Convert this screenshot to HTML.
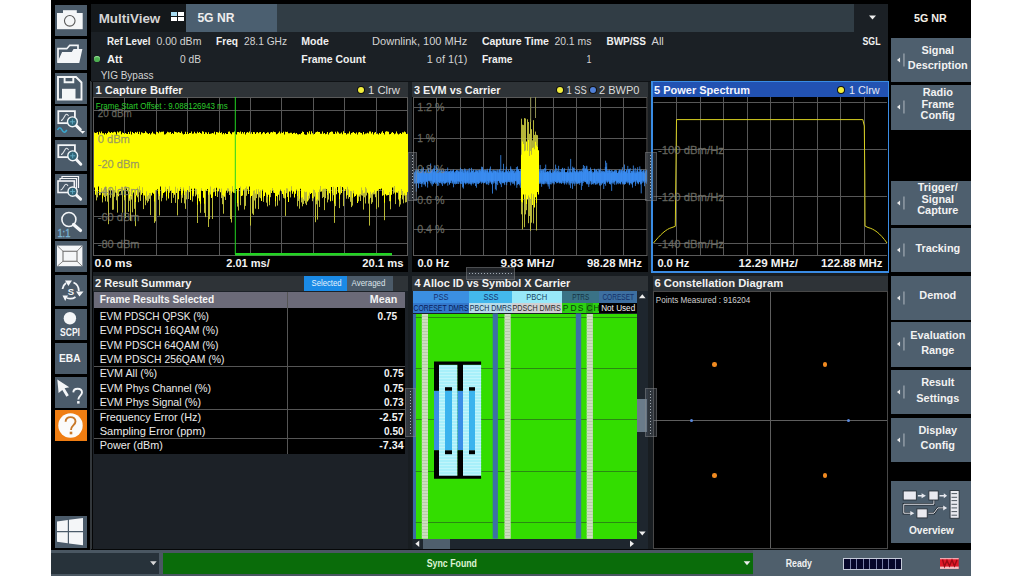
<!DOCTYPE html>
<html><head><meta charset="utf-8"><style>
html,body{margin:0;padding:0;width:1024px;height:576px;overflow:hidden;background:#fff;font-family:"Liberation Sans", sans-serif;}
svg text{font-family:"Liberation Sans", sans-serif;}
</style></head><body>
<div style="position:absolute;left:51px;top:0px;width:920px;height:576px;background:#000;"></div><div style="position:absolute;left:55px;top:5px;width:32px;height:31px;background:#4b5b6a;"></div><div style="position:absolute;left:55px;top:39px;width:32px;height:31px;background:#4b5b6a;"></div><div style="position:absolute;left:55px;top:73px;width:32px;height:31px;background:#4b5b6a;"></div><div style="position:absolute;left:55px;top:106px;width:32px;height:31px;background:#4b5b6a;"></div><div style="position:absolute;left:55px;top:140px;width:32px;height:31px;background:#4b5b6a;"></div><div style="position:absolute;left:55px;top:174px;width:32px;height:31px;background:#4b5b6a;"></div><div style="position:absolute;left:55px;top:208px;width:32px;height:31px;background:#4b5b6a;"></div><div style="position:absolute;left:55px;top:241px;width:32px;height:31px;background:#4b5b6a;"></div><div style="position:absolute;left:55px;top:275px;width:32px;height:31px;background:#4b5b6a;"></div><div style="position:absolute;left:55px;top:309px;width:32px;height:31px;background:#4b5b6a;"></div><div style="position:absolute;left:55px;top:343px;width:32px;height:31px;background:#4b5b6a;"></div><div style="position:absolute;left:55px;top:377px;width:32px;height:31px;background:#4b5b6a;"></div><div style="position:absolute;left:55px;top:410px;width:32px;height:31px;background:#ef7d12;"></div><div style="position:absolute;left:55px;top:516px;width:32px;height:32px;background:#4b5b6a;"></div><svg style="position:absolute;left:55px;top:5px" width="32" height="31" viewBox="0 0 32 31"><rect x="2" y="8" width="25.7" height="16.2" fill="#f4f6f8"/><rect x="8" y="5.2" width="13.8" height="3" fill="#f4f6f8"/><circle cx="14.75" cy="15.8" r="5.3" stroke="#5a5a5a" stroke-width="1.1" fill="none"/></svg><svg style="position:absolute;left:55px;top:39px" width="32" height="31" viewBox="0 0 32 31"><path d="M3 23.5V9.7H11.8L14.8 6.3H23V10" stroke="#f4f6f8" stroke-width="1.7" fill="none"/><path d="M2.1 23.9L7.1 13H16.75L18.6 9.9H27.4L24.25 23.9Z" fill="#f4f6f8"/></svg><svg style="position:absolute;left:55px;top:73px" width="32" height="31" viewBox="0 0 32 31"><path d="M3 4H21L26.5 9.5V26.5H3Z" stroke="#f4f6f8" stroke-width="1.9" fill="none"/><path d="M9.6 4V9.3H18.3V4" stroke="#f4f6f8" stroke-width="1.9" fill="none"/><rect x="7" y="15.8" width="13.5" height="10.4" fill="#f4f6f8"/></svg><svg style="position:absolute;left:55px;top:106px" width="32" height="31" viewBox="0 0 32 31"><rect x="3.3" y="5.15" width="16.6" height="12" stroke="#f4f6f8" stroke-width="1.8" fill="none"/><path d="M6 14.5C8.5 14.5 9.5 8.5 11.5 8.3C12.5 8.2 13 9 13.5 10" stroke="#e0e4e8" stroke-width="1.1" fill="none"/><path d="M17.4 15.8L25.3 23.6" stroke="#f4f6f8" stroke-width="3" stroke-linecap="round"/><circle cx="17.4" cy="15.8" r="4.9" fill="#2f6275" stroke="#f4f6f8" stroke-width="1.4"/><path d="M14.899999999999999 15.8H19.9M17.4 13.3V18.3" stroke="#5fa8c0" stroke-width="1"/><path d="M24.9 24.9H30.2L27.6 27.8Z" fill="#f4f6f8"/><path d="M2.5 24C4 21 5.5 21 7 24S10 27 11.8 24" stroke="#3aa8d0" stroke-width="1.6" fill="none"/></svg><svg style="position:absolute;left:55px;top:140px" width="32" height="31" viewBox="0 0 32 31"><rect x="3.3" y="5.15" width="16.6" height="12" stroke="#f4f6f8" stroke-width="1.8" fill="none"/><path d="M6 14.5C8.5 14.5 9.5 8.5 11.5 8.3C12.5 8.2 13 9 13.5 10" stroke="#e0e4e8" stroke-width="1.1" fill="none"/><path d="M17.7 15.8L25.8 24.2" stroke="#f4f6f8" stroke-width="3" stroke-linecap="round"/><circle cx="17.7" cy="15.8" r="4.9" fill="#2f6275" stroke="#f4f6f8" stroke-width="1.4"/><path d="M15.2 15.8H20.2M17.7 13.3V18.3" stroke="#5fa8c0" stroke-width="1"/></svg><svg style="position:absolute;left:55px;top:174px" width="32" height="31" viewBox="0 0 32 31"><path d="M7 4.5V2.5H23.5V14" stroke="#f4f6f8" stroke-width="1.2" fill="none"/><path d="M5 6.5V4.5H21.5V16" stroke="#f4f6f8" stroke-width="1.2" fill="none"/><rect x="3" y="7" width="16.3" height="11.5" stroke="#f4f6f8" stroke-width="1.6" fill="none"/><path d="M5.5 16C8 16 9 10.5 11 10.3C12 10.2 12.5 11 13 12" stroke="#e0e4e8" stroke-width="1.1" fill="none"/><path d="M17.6 17.6L25.6 25.2" stroke="#f4f6f8" stroke-width="3" stroke-linecap="round"/><circle cx="17.6" cy="17.6" r="4.6" fill="#2f6275" stroke="#f4f6f8" stroke-width="1.4"/><path d="M15.100000000000001 17.6H20.1M17.6 15.100000000000001V20.1" stroke="#5fa8c0" stroke-width="1"/></svg><svg style="position:absolute;left:55px;top:208px" width="32" height="31" viewBox="0 0 32 31"><path d="M18.5 16.5L25.5 22.5" stroke="#f4f6f8" stroke-width="3.2" stroke-linecap="round"/><circle cx="13.9" cy="11.5" r="7" fill="none" stroke="#f4f6f8" stroke-width="1.6"/><text x="2.4" y="29" font-family="Liberation Sans" font-size="10.5" fill="#7ab6d6" stroke="#7ab6d6" stroke-width="0.3" textLength="13" lengthAdjust="spacingAndGlyphs">1:1</text></svg><svg style="position:absolute;left:55px;top:241px" width="32" height="31" viewBox="0 0 32 31"><rect x="2" y="4.6" width="25.4" height="20.6" fill="#f4f6f8"/><rect x="8" y="10.25" width="14" height="10" fill="none" stroke="#666" stroke-width="1"/><path d="M2.5 5L8 10.25M27 5L22 10.25M2.5 25L8 20.25M27 25L22 20.25" stroke="#777" stroke-width="0.9"/></svg><svg style="position:absolute;left:55px;top:275px" width="32" height="31" viewBox="0 0 32 31"><path d="M7.5 14A9 9 0 0 1 11 8M18.5 7.5A9 9 0 0 1 23.8 16M20.5 22A9 9 0 0 1 12 23" stroke="#f4f6f8" stroke-width="1.8" fill="none"/><path d="M10 5.5H17L13.4 11Z M21 16.5H28.5L24.5 21.5Z M7.5 20.5H13L10.2 26Z" fill="#f4f6f8"/><text x="15.8" y="20" text-anchor="middle" font-family="Liberation Sans" font-size="9.5" font-weight="bold" fill="#f4f6f8">S</text></svg><svg style="position:absolute;left:55px;top:309px" width="32" height="31" viewBox="0 0 32 31"><circle cx="14.9" cy="9.25" r="6.2" fill="#f4f6f8"/><text x="5" y="27.4" font-family="Liberation Sans" font-size="10" font-weight="bold" fill="#f4f6f8" textLength="20" lengthAdjust="spacingAndGlyphs">SCPI</text></svg><svg style="position:absolute;left:55px;top:343px" width="32" height="31" viewBox="0 0 32 31"><text x="4" y="18.9" font-family="Liberation Sans" font-size="10.8" font-weight="bold" fill="#f4f6f8" textLength="21.5" lengthAdjust="spacingAndGlyphs">EBA</text></svg><svg style="position:absolute;left:55px;top:377px" width="32" height="31" viewBox="0 0 32 31"><path d="M2.3 2.4L14.3 10.3L9.6 11.3L13.8 18.2L11.4 19.8L7.3 12.9L3.6 16Z" fill="#f4f6f8"/><path d="M18.3 15.3C18.5 12.8 20.5 11.8 22.6 11.8C25 11.8 27 13.2 27 15.6C27 18.5 23.3 18.8 23.3 22.6" stroke="#f4f6f8" stroke-width="1.9" fill="none"/><rect x="22.1" y="24.1" width="2.5" height="2.5" fill="#f4f6f8"/></svg><svg style="position:absolute;left:55px;top:410px" width="32" height="31" viewBox="0 0 32 31"><circle cx="15.5" cy="15.5" r="12.2" fill="#fbfbfa"/><path d="M10.6 11.8C10.6 8.7 12.8 7.1 15.5 7.1C18.3 7.1 20.5 8.9 20.5 11.6C20.5 15.1 16 15.4 16 19.9" stroke="#c87828" stroke-width="1.9" fill="none"/><rect x="14.7" y="21.7" width="2.6" height="2.6" fill="#c87828"/></svg><svg style="position:absolute;left:55px;top:516px" width="32" height="32" viewBox="0 0 32 32"><path d="M2 5.5L12.8 4V15H2Z M14 3.8L28 2V15H14Z M2 16.2H12.8V27.2L2 25.7Z M14 16.2H28V29.2L14 27.4Z" fill="#f4f6f8"/></svg><div style="position:absolute;left:91px;top:3.5px;width:763px;height:28px;background:#313d45;"></div><div style="position:absolute;left:91px;top:3.5px;width:95px;height:28px;background:#14181b;"></div><div style="position:absolute;left:186px;top:3.5px;width:91px;height:28px;background:#4b5f70;"></div><div style="position:absolute;left:854px;top:3.5px;width:34px;height:28.5px;background:#1b2025;"></div><div style="position:absolute;left:171px;top:12px;width:6px;height:4px;background:#a8dcf2;"></div><div style="position:absolute;left:178px;top:12px;width:6px;height:4px;background:#ffffff;"></div><div style="position:absolute;left:171px;top:17px;width:6px;height:4px;background:#ffffff;"></div><div style="position:absolute;left:178px;top:17px;width:6px;height:4px;background:#ffffff;"></div><svg style="position:absolute;left:866px;top:12px" width="14" height="12"><path d="M3.0 3.4H10.0L6.5 7.6Z" fill="#eee"/></svg><div style="position:absolute;left:91px;top:31.5px;width:797px;height:49.3px;background:#1b2025;"></div><div style="position:absolute;left:93.6px;top:55.6px;width:6.4px;height:6px;border-radius:50%;background:#4caf50;box-shadow:inset 0 1px 1px #9be39b"></div><div style="position:absolute;left:91px;top:81px;width:797px;height:469px;background:#181d21;"></div><div style="position:absolute;left:89.6px;top:81px;width:2.4px;height:469px;background:#33383c;"></div><div style="position:absolute;left:92px;top:81px;width:1px;height:469px;background:#050607;"></div><div style="position:absolute;left:91px;top:548.5px;width:797px;height:1.8px;background:#060809;"></div><div style="position:absolute;left:91px;top:80.7px;width:797px;height:1.3px;background:#0f1215;"></div><div style="position:absolute;left:93px;top:82px;width:315px;height:190px;background:#000;"></div><div style="position:absolute;left:93px;top:82px;width:315px;height:15px;background:#2e3337;"></div><div style="position:absolute;left:358px;top:87px;width:6px;height:6px;border-radius:50%;background:#f2ee3c;box-shadow:0 0 0 1px #111"></div><svg style="position:absolute;left:93px;top:97px" width="315" height="159" viewBox="93 97 315 159"><path d="M124.5 97V255.5 M156.5 97V255.5 M187.5 97V255.5 M219.5 97V255.5 M250.5 97V255.5 M281.5 97V255.5 M313.5 97V255.5 M344.5 97V255.5 M376.5 97V255.5 M93.5 110.5H407.5 M93.5 136.5H407.5 M93.5 163.5H407.5 M93.5 190.5H407.5 M93.5 216.5H407.5 M93.5 243.5H407.5" stroke="#575757" stroke-width="1" fill="none"/><rect x="93.5" y="97.5" width="314" height="158" stroke="#5a5a5a" fill="none" stroke-width="1"/><path d="M96.5 188.9V200.4 M97.5 190.3V197.4 M100.5 190.4V194.9 M101.5 186.1V192.6 M102.5 196.5V202.4 M103.5 189.3V195.6 M104.5 185.2V197.0 M105.5 184.4V201.3 M106.5 187.1V195.8 M107.5 192.4V201.7 M108.5 191.0V224.2 M110.5 186.3V197.8 M112.5 189.5V209.9 M113.5 188.2V209.6 M114.5 188.1V196.8 M115.5 184.0V192.6 M116.5 190.9V200.3 M117.5 193.0V212.6 M122.5 185.2V212.7 M124.5 195.1V200.3 M125.5 184.3V218.1 M128.5 192.1V211.8 M129.5 196.6V200.8 M130.5 193.7V220.9 M131.5 193.9V199.6 M132.5 192.2V212.3 M134.5 193.1V208.8 M135.5 199.9V226.2 M137.5 185.5V197.3 M138.5 193.8V202.2 M139.5 184.1V192.4 M140.5 188.3V200.9 M142.5 185.3V193.0 M143.5 193.0V209.1 M145.5 196.7V205.2 M146.5 189.2V200.5 M147.5 194.2V202.7 M148.5 193.1V201.2 M149.5 190.9V198.8 M150.5 191.0V215.1 M154.5 199.4V222.9 M155.5 188.0V221.3 M158.5 191.7V199.8 M159.5 193.9V215.5 M161.5 188.2V201.3 M162.5 193.2V197.9 M165.5 184.7V191.4 M166.5 194.6V200.5 M169.5 184.3V192.7 M171.5 188.3V203.0 M173.5 191.1V197.8 M175.5 184.8V202.9 M177.5 186.6V215.4 M180.5 184.9V189.3 M181.5 192.9V202.9 M182.5 191.2V197.8 M183.5 185.5V189.8 M184.5 192.9V203.4 M185.5 189.2V208.9 M186.5 189.8V199.4 M188.5 189.6V199.0 M189.5 184.0V192.1 M192.5 193.8V201.6 M193.5 191.7V196.3 M195.5 186.8V196.3 M196.5 186.9V194.6 M197.5 202.7V223.0 M198.5 192.2V198.3 M200.5 201.7V212.8 M201.5 186.3V190.5 M204.5 201.7V212.9 M205.5 187.7V217.1 M208.5 192.8V227.0 M209.5 190.3V219.1 M210.5 184.5V194.5 M212.5 194.8V219.0 M213.5 187.0V192.3 M214.5 186.1V191.8 M217.5 189.7V197.0 M221.5 186.5V198.1 M222.5 193.1V204.2 M223.5 193.8V213.7 M225.5 190.8V200.0 M227.5 186.3V192.8 M228.5 186.5V191.4 M229.5 189.2V195.0 M230.5 188.7V219.0 M231.5 191.2V222.5 M232.5 184.2V191.6 M234.5 187.4V193.0 M237.5 201.1V206.6 M238.5 188.2V210.5 M240.5 184.6V205.2 M244.5 187.5V209.5 M245.5 186.1V205.9 M246.5 184.5V195.8 M250.5 195.7V225.6 M252.5 193.2V213.6 M253.5 188.8V214.9 M254.5 188.3V200.5 M255.5 191.4V208.7 M256.5 187.2V198.1 M258.5 187.3V209.1 M259.5 189.8V197.4 M260.5 188.2V198.2 M263.5 195.3V201.9 M266.5 192.2V202.7 M267.5 194.9V206.4 M269.5 199.4V205.2 M270.5 188.0V197.2 M272.5 186.0V190.5 M273.5 188.0V192.7 M275.5 199.2V206.5 M277.5 195.1V205.6 M279.5 189.5V200.6 M283.5 193.4V197.9 M284.5 187.9V198.5 M285.5 195.9V215.9 M286.5 186.2V193.2 M287.5 186.5V197.0 M290.5 189.8V197.4 M291.5 184.2V190.1 M297.5 194.0V206.3 M298.5 188.9V200.9 M299.5 196.8V208.7 M301.5 195.8V202.4 M302.5 195.2V206.3 M303.5 197.2V204.0 M304.5 189.6V200.8 M305.5 190.3V203.5 M306.5 189.8V205.1 M308.5 193.8V200.3 M309.5 190.5V198.6 M312.5 196.1V201.2 M313.5 187.4V198.4 M314.5 188.1V196.6 M315.5 190.5V222.2 M316.5 198.4V204.3 M317.5 197.3V219.6 M318.5 190.1V200.6 M319.5 187.6V207.0 M320.5 184.1V191.8 M322.5 187.4V198.1 M323.5 186.7V197.0 M324.5 186.7V210.1 M325.5 186.5V198.1 M327.5 193.1V202.4 M328.5 188.7V199.6 M332.5 191.2V200.8 M333.5 184.7V195.2 M334.5 201.6V222.9 M335.5 186.4V206.1 M339.5 197.3V208.1 M340.5 184.3V194.5 M343.5 186.0V206.1 M346.5 193.8V198.7 M347.5 184.8V195.1 M348.5 187.6V198.7 M350.5 189.0V201.8 M351.5 189.3V207.1 M352.5 195.7V205.6 M353.5 188.4V193.4 M358.5 193.8V201.3 M359.5 192.4V196.7 M360.5 191.9V201.0 M361.5 185.4V195.3 M362.5 188.3V195.7 M363.5 191.2V209.6 M364.5 190.8V197.3 M365.5 185.0V203.5 M366.5 186.5V195.5 M368.5 191.8V203.6 M369.5 197.3V225.6 M370.5 189.7V197.8 M371.5 192.3V203.9 M372.5 190.8V202.3 M373.5 190.3V194.4 M374.5 188.2V194.3 M375.5 191.4V197.2 M376.5 189.2V208.9 M378.5 187.5V207.3 M383.5 188.3V195.2 M384.5 200.8V220.2 M389.5 190.1V201.2 M390.5 199.3V209.3 M393.5 185.4V193.8 M394.5 184.1V192.6 M395.5 192.4V204.1 M398.5 189.1V199.5 M399.5 198.9V206.7 M400.5 196.1V204.5 M401.5 186.9V195.0 M402.5 189.1V199.4 M403.5 193.0V203.3 M404.5 191.2V195.6 M405.5 193.3V202.5 M406.5 193.1V202.1" stroke="#c4c43a" stroke-width="0.95" fill="none"/><path d="M94.5 132.4V187.5 M95.5 133.1V194.7 M96.5 132.8V190.9 M97.5 132.1V192.3 M98.5 134.6V186.5 M99.5 131.8V195.3 M100.5 133.3V192.4 M101.5 131.5V188.1 M102.5 133.3V198.5 M103.5 133.3V191.3 M104.5 134.6V187.2 M105.5 133.0V186.4 M106.5 134.3V189.1 M107.5 132.9V194.4 M108.5 131.5V193.0 M109.5 132.3V189.9 M110.5 132.9V188.3 M111.5 132.1V189.9 M112.5 132.8V191.5 M113.5 132.2V190.2 M114.5 131.8V190.1 M115.5 132.2V186.0 M116.5 134.5V192.9 M117.5 131.5V195.0 M118.5 132.6V196.3 M119.5 131.5V191.5 M120.5 131.3V191.1 M121.5 134.3V194.7 M122.5 132.5V187.2 M123.5 132.9V190.3 M124.5 134.1V197.1 M125.5 133.1V186.3 M126.5 133.7V188.6 M127.5 133.9V191.3 M128.5 132.1V194.1 M129.5 134.1V198.6 M130.5 131.4V195.7 M131.5 134.5V195.9 M132.5 132.1V194.2 M133.5 132.9V192.5 M134.5 133.5V195.1 M135.5 131.9V201.9 M136.5 132.7V195.5 M137.5 131.7V187.5 M138.5 134.1V195.8 M139.5 131.7V186.1 M140.5 134.5V190.3 M141.5 132.2V194.8 M142.5 132.7V187.3 M143.5 133.3V195.0 M144.5 133.1V195.6 M145.5 131.3V198.7 M146.5 132.4V191.2 M147.5 133.2V196.2 M148.5 133.9V195.1 M149.5 133.0V192.9 M150.5 134.5V193.0 M151.5 133.2V195.4 M152.5 131.7V192.8 M153.5 133.6V193.8 M154.5 133.7V201.4 M155.5 134.5V190.0 M156.5 131.8V190.3 M157.5 132.0V189.2 M158.5 133.2V193.7 M159.5 131.5V195.9 M160.5 132.2V186.4 M161.5 131.7V190.2 M162.5 131.8V195.2 M163.5 131.5V192.9 M164.5 134.5V192.3 M165.5 134.2V186.7 M166.5 133.2V196.6 M167.5 131.7V189.6 M168.5 132.3V198.6 M169.5 132.5V186.3 M170.5 131.9V190.7 M171.5 134.1V190.3 M172.5 133.0V192.9 M173.5 134.1V193.1 M174.5 131.5V194.7 M175.5 131.9V186.8 M176.5 132.3V193.0 M177.5 132.8V188.6 M178.5 132.1V199.2 M179.5 132.6V190.7 M180.5 133.0V186.9 M181.5 131.4V194.9 M182.5 133.5V193.2 M183.5 134.6V187.5 M184.5 134.1V194.9 M185.5 131.8V191.2 M186.5 134.1V191.8 M187.5 132.1V189.9 M188.5 134.1V191.6 M189.5 133.0V186.0 M190.5 133.1V200.0 M191.5 131.6V188.7 M192.5 133.8V195.8 M193.5 133.6V193.7 M194.5 131.8V188.5 M195.5 133.2V188.8 M196.5 133.6V188.9 M197.5 131.7V204.7 M198.5 132.9V194.2 M199.5 132.0V201.3 M200.5 133.1V203.7 M201.5 133.7V188.3 M202.5 131.3V190.9 M203.5 131.8V197.8 M204.5 133.9V203.7 M205.5 132.3V189.7 M206.5 132.5V190.8 M207.5 134.1V188.9 M208.5 132.2V194.8 M209.5 134.1V192.3 M210.5 133.7V186.5 M211.5 133.5V198.1 M212.5 132.9V196.8 M213.5 133.5V189.0 M214.5 131.8V188.1 M215.5 134.4V196.0 M216.5 132.0V187.8 M217.5 132.2V191.7 M218.5 132.7V191.2 M219.5 131.5V188.8 M220.5 133.0V192.3 M221.5 132.2V188.5 M222.5 134.2V195.1 M223.5 132.9V195.8 M224.5 134.2V196.8 M225.5 133.1V192.8 M226.5 133.9V190.6 M227.5 134.0V188.3 M228.5 131.7V188.5 M229.5 131.5V191.2 M230.5 133.3V190.7 M231.5 134.3V193.2 M232.5 132.3V186.2 M233.5 132.2V192.7 M234.5 131.4V189.4 M235.5 134.0V193.4 M236.5 134.6V189.1 M237.5 132.1V203.1 M238.5 132.1V190.2 M239.5 132.6V188.1 M240.5 131.5V186.6 M241.5 133.8V196.0 M242.5 131.9V195.4 M243.5 133.6V189.8 M244.5 131.9V189.5 M245.5 134.6V188.1 M246.5 132.8V186.5 M247.5 132.0V189.6 M248.5 132.7V194.1 M249.5 131.4V186.6 M250.5 133.8V197.7 M251.5 132.2V195.9 M252.5 133.9V195.2 M253.5 132.1V190.8 M254.5 132.2V190.3 M255.5 134.0V193.4 M256.5 132.4V189.2 M257.5 132.0V194.2 M258.5 133.2V189.3 M259.5 132.2V191.8 M260.5 132.1V190.2 M261.5 134.2V201.1 M262.5 133.2V189.7 M263.5 132.1V197.3 M264.5 132.6V195.9 M265.5 134.0V192.5 M266.5 132.9V194.2 M267.5 132.3V196.9 M268.5 132.6V194.7 M269.5 133.9V201.4 M270.5 132.6V190.0 M271.5 132.0V192.9 M272.5 132.4V188.0 M273.5 131.6V190.0 M274.5 131.9V193.0 M275.5 132.3V201.2 M276.5 134.2V196.0 M277.5 133.8V197.1 M278.5 132.7V194.8 M279.5 131.4V191.5 M280.5 133.4V189.7 M281.5 132.3V191.2 M282.5 133.0V194.0 M283.5 131.7V195.4 M284.5 134.4V189.9 M285.5 131.8V197.9 M286.5 131.9V188.2 M287.5 131.7V188.5 M288.5 133.2V202.0 M289.5 133.3V191.5 M290.5 132.7V191.8 M291.5 132.8V186.2 M292.5 133.9V193.8 M293.5 132.9V191.4 M294.5 132.8V197.5 M295.5 133.8V193.8 M296.5 133.0V189.8 M297.5 134.2V196.0 M298.5 134.6V190.9 M299.5 134.0V198.8 M300.5 134.3V188.7 M301.5 133.0V197.8 M302.5 131.4V197.2 M303.5 131.9V199.2 M304.5 134.3V191.6 M305.5 134.7V192.3 M306.5 134.7V191.8 M307.5 131.9V201.6 M308.5 133.5V195.8 M309.5 131.3V192.5 M310.5 134.3V193.9 M311.5 131.3V193.1 M312.5 133.3V198.1 M313.5 134.5V189.4 M314.5 134.0V190.1 M315.5 132.5V192.5 M316.5 132.1V200.4 M317.5 131.5V199.3 M318.5 132.0V192.1 M319.5 131.9V189.6 M320.5 133.7V186.1 M321.5 133.8V191.6 M322.5 131.4V189.4 M323.5 133.7V188.7 M324.5 133.1V188.7 M325.5 134.3V188.5 M326.5 133.8V189.3 M327.5 132.1V195.1 M328.5 134.6V190.7 M329.5 132.8V193.2 M330.5 132.0V201.3 M331.5 131.4V187.1 M332.5 131.8V193.2 M333.5 133.8V186.7 M334.5 134.1V203.6 M335.5 131.7V188.4 M336.5 133.5V194.3 M337.5 131.6V187.0 M338.5 132.4V192.8 M339.5 133.7V199.3 M340.5 133.4V186.3 M341.5 132.5V193.0 M342.5 134.2V186.9 M343.5 131.3V188.0 M344.5 133.0V190.9 M345.5 133.0V189.5 M346.5 134.5V195.8 M347.5 133.5V186.8 M348.5 133.4V189.6 M349.5 131.6V196.9 M350.5 134.4V191.0 M351.5 132.9V191.3 M352.5 132.5V197.7 M353.5 131.9V190.4 M354.5 132.9V196.8 M355.5 133.7V196.0 M356.5 132.4V194.5 M357.5 134.6V202.9 M358.5 132.6V195.8 M359.5 132.0V194.4 M360.5 132.7V193.9 M361.5 132.9V187.4 M362.5 134.4V190.3 M363.5 132.1V193.2 M364.5 134.2V192.8 M365.5 133.4V187.0 M366.5 133.4V188.5 M367.5 132.7V192.8 M368.5 133.5V193.8 M369.5 131.4V199.3 M370.5 131.6V191.7 M371.5 133.5V194.3 M372.5 132.0V192.8 M373.5 134.6V192.3 M374.5 132.7V190.2 M375.5 132.1V193.4 M376.5 134.0V191.2 M377.5 133.5V190.7 M378.5 134.6V189.5 M379.5 132.9V188.9 M380.5 134.1V189.5 M381.5 132.6V188.5 M382.5 131.3V195.7 M383.5 132.9V190.3 M384.5 134.5V202.8 M385.5 131.8V194.3 M386.5 131.3V195.5 M387.5 131.6V195.2 M388.5 131.8V195.0 M389.5 134.3V192.1 M390.5 134.0V201.3 M391.5 132.8V194.8 M392.5 132.1V187.4 M393.5 132.9V187.4 M394.5 134.2V186.1 M395.5 133.6V194.4 M396.5 131.6V192.4 M397.5 133.4V192.8 M398.5 134.6V191.1 M399.5 133.7V200.9 M400.5 133.1V198.1 M401.5 134.1V188.9 M402.5 132.2V191.1 M403.5 132.4V195.0 M404.5 131.4V193.2 M405.5 132.3V195.3 M406.5 134.0V195.1 M407.5 133.7V192.0" stroke="#ffff00" stroke-width="1.05" fill="none"/><path d="M235.3 97V254" stroke="#22d422" stroke-width="1" fill="none"/><path d="M235 254.3H392" stroke="#22d422" stroke-width="2.4" fill="none"/></svg><div style="position:absolute;left:412px;top:82px;width:236px;height:190px;background:#000;"></div><div style="position:absolute;left:412px;top:82px;width:236px;height:15px;background:#2e3337;"></div><div style="position:absolute;left:556.6px;top:87px;width:6px;height:6px;border-radius:50%;background:#f2ee3c;box-shadow:0 0 0 1px #111"></div><div style="position:absolute;left:590px;top:87px;width:6px;height:6px;border-radius:50%;background:#5080d8;box-shadow:0 0 0 1px #111"></div><svg style="position:absolute;left:412px;top:97px" width="236" height="159" viewBox="412 97 236 159"><path d="M436.5 97V255.5 M460.5 97V255.5 M483.5 97V255.5 M506.5 97V255.5 M530.5 97V255.5 M553.5 97V255.5 M576.5 97V255.5 M600.5 97V255.5 M623.5 97V255.5 M413.5 107.5H647 M413.5 138.5H647 M413.5 169.5H647 M413.5 199.5H647 M413.5 229.5H647" stroke="#575757" stroke-width="1" fill="none"/><rect x="413.5" y="97.5" width="233.5" height="158" stroke="#5a5a5a" fill="none" stroke-width="1"/><path d="M414.22 172.2V183.9 M414.69 172.6V183.0 M414.45 172.6V181.2 M415.23 170.8V182.9 M415.75 171.5V183.6 M415.79 170.1V182.7 M416.33 171.4V180.5 M416.25 170.1V191.6 M416.31 172.9V186.5 M417.64 169.7V183.2 M417.76 169.8V183.2 M417.59 170.5V183.3 M418.49 171.8V188.2 M418.61 169.7V182.6 M418.58 170.1V181.6 M419.67 171.2V183.5 M419.62 171.8V180.3 M419.70 172.8V182.7 M420.43 171.9V181.9 M420.37 172.2V184.0 M420.69 169.5V181.9 M421.54 168.6V183.7 M421.75 170.6V183.6 M421.76 168.9V187.1 M422.32 170.4V183.0 M422.25 170.5V183.6 M422.74 172.7V181.0 M423.31 173.0V182.1 M423.44 167.3V181.6 M423.26 171.5V184.5 M424.41 172.0V180.7 M424.49 171.5V184.5 M424.77 171.8V183.5 M425.22 172.6V184.3 M425.72 170.1V180.2 M425.44 171.3V186.4 M426.58 170.0V181.2 M426.30 173.3V181.8 M426.41 173.4V181.7 M427.63 173.1V187.6 M427.76 172.1V183.8 M427.26 172.2V182.7 M428.30 170.8V180.6 M428.32 167.6V180.1 M428.72 169.6V181.0 M429.71 171.6V180.4 M429.49 172.0V181.5 M429.53 171.4V180.3 M430.29 170.1V181.2 M430.39 170.6V183.2 M430.60 163.5V180.3 M431.32 170.3V181.3 M431.26 171.0V184.5 M431.38 170.7V180.3 M432.70 169.3V181.5 M432.28 170.2V186.2 M432.25 170.2V183.4 M433.62 171.9V183.6 M433.44 172.7V184.2 M433.72 168.2V181.5 M434.36 165.4V182.1 M434.56 170.2V182.8 M434.27 169.5V182.0 M435.63 172.4V183.9 M435.77 171.0V180.3 M435.21 171.5V182.4 M436.69 172.9V180.5 M436.55 166.6V183.2 M436.63 171.6V180.5 M437.27 168.0V182.3 M437.65 168.9V186.0 M437.45 170.2V184.2 M438.67 172.9V181.8 M438.68 169.8V182.0 M438.77 173.2V185.6 M439.52 171.9V182.8 M439.78 169.8V182.6 M439.73 172.6V182.8 M440.36 170.5V181.2 M440.51 171.7V182.8 M440.59 171.2V181.3 M441.36 170.0V184.3 M441.38 171.4V181.0 M441.70 171.1V183.1 M442.48 171.9V186.0 M442.35 171.7V182.1 M442.21 170.4V181.7 M443.49 170.9V181.1 M443.30 170.6V181.3 M443.46 169.8V183.2 M444.29 171.8V184.3 M444.71 170.8V183.0 M444.66 172.8V183.3 M445.28 171.4V183.2 M445.78 169.4V182.6 M445.56 171.8V183.5 M446.38 171.0V182.1 M446.67 171.1V181.7 M446.29 172.9V182.9 M447.39 171.8V180.4 M447.75 172.9V185.7 M447.66 167.5V182.2 M448.61 171.7V182.3 M448.77 171.1V182.7 M448.44 172.2V180.4 M449.49 171.7V184.0 M449.52 171.3V184.5 M449.51 171.8V184.4 M450.79 169.9V183.1 M450.51 173.1V180.7 M450.41 171.0V182.8 M451.67 173.5V180.2 M451.71 170.7V180.0 M451.53 171.8V180.9 M452.54 170.6V182.4 M452.30 170.7V183.7 M452.24 171.6V182.8 M453.41 169.5V181.5 M453.55 170.2V180.4 M453.55 170.9V187.3 M454.76 173.3V182.9 M454.38 172.9V184.0 M454.35 171.9V182.2 M455.73 171.1V181.0 M455.31 171.4V182.2 M455.43 173.4V184.4 M456.35 170.8V183.7 M456.40 170.3V183.8 M456.70 170.1V180.4 M457.30 170.0V183.8 M457.32 170.9V181.7 M457.28 173.3V181.0 M458.42 172.3V184.0 M458.27 170.5V181.0 M458.43 171.6V181.2 M459.25 172.1V181.4 M459.27 170.2V181.4 M459.24 171.7V182.3 M460.44 170.4V183.2 M460.28 173.1V184.0 M460.45 167.8V183.0 M461.41 172.1V181.1 M461.63 171.7V184.1 M461.43 169.2V180.9 M462.54 169.7V187.4 M462.41 172.4V182.0 M462.23 169.5V183.5 M463.67 172.9V180.5 M463.44 170.3V186.3 M463.45 172.5V188.6 M464.58 173.2V183.3 M464.76 168.3V181.9 M464.68 170.0V180.2 M465.53 170.5V184.4 M465.28 169.4V182.8 M465.47 172.3V182.9 M466.29 173.2V181.3 M466.66 171.8V183.7 M466.66 170.2V182.7 M467.37 172.0V181.8 M467.48 170.3V183.0 M467.65 170.8V180.0 M468.27 169.8V184.4 M468.20 171.5V180.9 M468.59 173.2V182.8 M469.70 170.1V180.1 M469.30 168.1V183.8 M469.31 172.6V183.3 M470.42 172.8V181.7 M470.69 172.7V182.6 M470.50 172.3V184.3 M471.30 170.1V185.5 M471.31 171.3V181.9 M471.46 167.8V183.8 M472.40 170.6V182.3 M472.30 171.3V183.7 M472.32 170.7V182.5 M473.75 169.8V182.1 M473.69 173.0V184.3 M473.54 169.7V182.7 M474.41 173.3V182.9 M474.25 172.5V183.1 M474.52 172.1V182.6 M475.53 171.8V186.0 M475.35 169.9V183.0 M475.27 171.5V181.0 M476.24 171.6V180.4 M476.65 171.3V182.5 M476.44 170.0V187.7 M477.28 170.2V182.5 M477.33 171.9V183.9 M477.57 170.7V181.9 M478.30 173.0V184.1 M478.70 172.5V183.4 M478.63 170.0V183.3 M479.68 169.7V180.4 M479.32 170.0V183.0 M479.27 171.3V182.7 M480.43 170.7V181.3 M480.68 170.1V182.4 M480.72 172.2V180.7 M481.44 172.2V183.7 M481.57 166.7V181.8 M481.55 169.8V181.0 M482.43 168.6V182.1 M482.79 168.8V183.0 M482.50 166.9V181.2 M483.80 170.5V182.4 M483.66 169.6V183.5 M483.68 172.0V181.6 M484.66 173.0V183.1 M484.53 172.5V182.9 M484.49 170.1V181.5 M485.72 170.3V181.6 M485.30 171.3V182.6 M485.53 169.8V181.4 M486.25 173.2V184.1 M486.66 170.2V184.4 M486.74 171.2V180.3 M487.62 170.6V180.9 M487.72 170.4V180.9 M487.25 168.8V184.3 M488.52 172.7V182.1 M488.65 173.0V185.1 M488.23 172.1V183.1 M489.56 168.7V181.5 M489.54 170.5V180.1 M489.26 171.1V183.3 M490.45 166.5V180.4 M490.56 171.7V182.5 M490.66 170.8V181.2 M491.47 172.6V183.5 M491.49 170.6V184.3 M491.34 172.1V181.6 M492.53 172.5V182.3 M492.64 170.2V182.1 M492.50 173.1V193.6 M493.39 172.0V183.6 M493.44 169.8V180.3 M493.77 170.9V181.8 M494.34 171.3V181.2 M494.80 170.3V182.9 M494.72 170.4V180.7 M495.40 170.6V183.7 M495.56 171.4V180.7 M495.42 171.3V189.3 M496.80 172.6V180.8 M496.29 170.4V190.4 M496.75 172.0V184.1 M497.68 172.4V185.1 M497.26 170.5V181.0 M497.27 169.6V181.4 M498.29 170.1V180.8 M498.50 172.5V180.5 M498.73 173.2V181.0 M499.24 172.4V180.8 M499.42 169.7V181.8 M499.53 169.5V182.9 M500.44 172.3V183.9 M500.43 170.8V184.4 M500.76 155.1V180.0 M501.27 170.5V182.2 M501.39 172.9V187.1 M501.20 172.1V181.4 M502.80 172.5V182.3 M502.63 170.4V183.3 M502.39 171.1V182.8 M503.36 172.0V181.0 M503.49 173.1V183.2 M503.52 163.8V182.4 M504.58 172.3V183.7 M504.70 172.8V185.1 M504.68 172.4V182.2 M505.80 171.6V180.4 M505.66 172.3V182.2 M505.34 170.1V181.7 M506.54 171.0V182.3 M506.35 166.6V181.2 M506.68 170.3V185.2 M507.42 172.0V180.2 M507.69 172.4V181.8 M507.31 170.9V182.6 M508.40 173.4V181.7 M508.50 169.8V181.7 M508.48 173.1V180.1 M509.73 171.3V181.9 M509.60 171.3V182.3 M509.53 172.5V180.2 M510.69 172.6V180.7 M510.63 166.4V185.4 M510.80 168.5V181.9 M511.51 172.8V180.7 M511.39 169.5V181.2 M511.45 170.5V182.5 M512.71 169.7V183.9 M512.48 170.4V182.4 M512.32 171.5V181.6 M513.52 173.2V180.2 M513.68 171.1V181.5 M513.47 170.7V183.6 M514.58 173.2V185.4 M514.31 169.7V180.3 M514.60 173.2V183.6 M515.29 172.2V180.9 M515.77 172.9V180.4 M515.61 171.2V181.2 M516.38 167.1V180.2 M516.29 170.4V181.4 M516.79 173.1V187.8 M517.26 169.9V184.9 M517.27 171.4V181.9 M517.52 166.4V184.5 M518.76 170.7V183.4 M518.52 169.9V183.9 M518.34 169.1V184.0 M519.77 170.9V184.4 M519.31 171.1V185.4 M519.26 172.7V180.3 M520.22 171.7V182.7 M520.41 169.0V180.6 M520.40 171.0V187.8 M539.73 172.9V182.4 M539.30 170.0V184.0 M539.32 171.6V182.9 M540.21 164.9V182.3 M540.61 173.3V183.6 M540.22 170.4V180.7 M541.25 171.1V181.3 M541.24 169.6V183.5 M541.62 170.5V186.8 M542.75 172.8V183.6 M542.25 169.5V181.9 M542.28 170.5V184.1 M543.67 169.3V184.4 M543.65 171.4V183.5 M543.26 169.6V183.8 M544.60 172.4V180.7 M544.65 168.1V184.2 M544.70 172.8V182.7 M545.52 172.6V181.3 M545.70 164.6V183.5 M545.74 168.9V181.1 M546.68 172.2V181.8 M546.25 172.2V183.7 M546.70 172.1V181.5 M547.45 171.0V184.3 M547.71 171.9V182.6 M547.62 172.0V180.4 M548.22 171.3V186.5 M548.33 172.0V184.3 M548.50 173.1V184.0 M549.30 173.3V188.9 M549.69 171.1V184.3 M549.72 170.5V180.5 M550.60 171.6V184.2 M550.42 169.8V182.0 M550.61 172.1V181.7 M551.23 173.1V181.6 M551.65 172.8V182.5 M551.28 173.1V184.4 M552.55 173.3V180.7 M552.37 169.7V183.4 M552.79 172.5V182.4 M553.78 172.1V183.0 M553.70 172.3V183.4 M553.73 172.7V180.6 M554.23 170.1V180.8 M554.31 170.7V184.4 M554.46 170.7V180.9 M555.78 169.9V181.8 M555.58 164.6V182.0 M555.48 172.6V180.7 M556.42 171.7V183.4 M556.36 173.2V181.3 M556.76 168.2V182.5 M557.61 170.4V182.5 M557.59 171.2V180.5 M557.44 173.4V183.1 M558.68 173.3V181.5 M558.60 165.8V182.4 M558.50 172.1V180.3 M559.54 172.9V182.6 M559.29 170.6V183.5 M559.74 172.2V182.3 M560.28 172.5V182.9 M560.24 172.3V182.8 M560.26 171.9V181.9 M561.62 172.2V183.6 M561.28 169.8V183.9 M561.22 169.1V182.5 M562.40 172.2V182.8 M562.69 167.8V180.9 M562.45 167.9V180.1 M563.44 169.8V183.3 M563.80 171.5V181.0 M563.24 172.7V181.5 M564.47 169.9V183.1 M564.51 169.6V184.6 M564.54 168.2V180.9 M565.75 172.3V183.4 M565.72 172.4V180.3 M565.30 172.4V181.2 M566.41 172.0V181.9 M566.29 173.1V182.3 M566.68 172.6V184.5 M567.50 171.4V182.6 M567.63 170.3V180.1 M567.43 173.3V182.0 M568.55 172.7V181.2 M568.23 166.6V183.5 M568.57 173.1V180.3 M569.74 173.0V183.6 M569.55 168.8V182.1 M569.23 172.0V185.2 M570.34 171.4V183.0 M570.56 172.1V188.1 M570.67 158.9V181.0 M571.79 172.8V183.6 M571.33 172.6V181.1 M571.36 172.2V182.9 M572.63 166.6V180.5 M572.26 170.2V180.7 M572.53 172.6V188.9 M573.68 172.8V182.8 M573.20 167.8V181.3 M573.27 168.1V183.7 M574.53 170.7V180.5 M574.26 167.6V183.8 M574.79 171.0V185.8 M575.56 172.4V180.5 M575.59 171.6V181.8 M575.70 173.2V183.6 M576.73 169.5V183.8 M576.35 170.2V182.0 M576.79 170.7V182.9 M577.80 172.1V183.4 M577.21 172.5V181.1 M577.66 170.4V184.1 M578.26 172.6V183.6 M578.52 172.8V182.8 M578.76 171.5V182.9 M579.25 171.1V183.1 M579.63 170.3V184.8 M579.65 172.0V183.1 M580.33 171.8V180.1 M580.59 170.5V182.9 M580.21 171.9V181.5 M581.61 170.6V182.2 M581.45 170.6V181.7 M581.41 172.3V190.0 M582.68 168.4V181.0 M582.29 172.2V185.9 M582.26 172.1V183.4 M583.33 173.4V182.9 M583.42 165.0V180.6 M583.51 168.5V181.1 M584.66 166.0V181.3 M584.58 169.8V181.7 M584.70 171.4V180.2 M585.63 169.0V180.5 M585.27 168.2V182.2 M585.53 169.8V182.1 M586.78 166.4V182.5 M586.72 165.7V182.8 M586.64 169.6V184.2 M587.42 169.8V184.1 M587.59 170.0V182.2 M587.34 170.0V183.3 M588.77 171.5V187.0 M588.31 172.5V181.7 M588.22 170.4V184.7 M589.76 170.7V183.4 M589.34 171.1V180.1 M589.80 171.4V184.3 M590.47 167.5V180.9 M590.41 170.4V181.4 M590.20 171.0V180.7 M591.63 171.9V182.0 M591.51 169.7V184.7 M591.55 171.8V180.7 M592.72 171.3V184.0 M592.23 173.3V184.2 M592.78 173.1V181.3 M593.68 173.0V182.4 M593.55 172.1V183.2 M593.74 172.7V184.5 M594.51 168.8V182.3 M594.60 168.8V182.8 M594.59 171.1V183.1 M595.77 170.2V184.9 M595.34 170.3V184.3 M595.28 172.4V183.0 M596.45 169.6V181.5 M596.41 169.8V184.2 M596.21 172.3V180.8 M597.70 171.0V184.3 M597.32 172.1V183.2 M597.56 172.6V181.2 M598.52 172.9V182.7 M598.62 172.4V180.8 M598.21 168.7V183.2 M599.51 170.0V185.4 M599.23 170.8V182.2 M599.36 169.6V182.8 M600.31 172.7V181.5 M600.43 173.2V183.2 M600.31 168.4V185.8 M601.60 172.3V183.8 M601.34 171.2V185.1 M601.22 170.5V182.4 M602.57 171.5V182.9 M602.29 172.2V183.0 M602.78 170.4V183.7 M603.23 172.7V181.4 M603.73 171.8V189.0 M603.42 171.0V182.3 M604.43 172.4V183.7 M604.49 171.4V184.0 M604.76 172.3V181.7 M605.58 173.2V180.5 M605.57 160.7V185.7 M605.25 167.2V183.5 M606.66 162.8V180.2 M606.70 169.9V180.7 M606.27 166.6V181.9 M607.64 170.5V180.5 M607.56 173.1V182.1 M607.28 170.7V183.2 M608.40 170.3V180.5 M608.29 170.5V182.1 M608.40 172.9V180.8 M609.54 170.3V183.7 M609.77 169.5V182.7 M609.42 170.8V183.7 M610.75 171.0V182.3 M610.35 171.1V184.0 M610.65 173.2V184.5 M611.70 172.8V183.0 M611.41 170.0V181.5 M611.65 172.9V190.9 M612.53 172.2V180.2 M612.72 171.3V183.5 M612.22 170.4V182.1 M613.32 172.5V180.3 M613.39 171.3V183.6 M613.64 172.0V182.1 M614.70 170.7V184.8 M614.60 171.6V181.9 M614.62 170.3V181.6 M615.46 170.0V180.2 M615.69 172.4V180.4 M615.68 172.7V181.0 M616.43 170.4V184.5 M616.40 172.3V180.9 M616.29 170.4V182.3 M617.31 173.3V182.5 M617.42 173.1V183.4 M617.74 173.1V182.3 M618.29 173.3V184.2 M618.36 172.0V181.9 M618.26 170.6V182.3 M619.34 169.5V183.2 M619.74 170.5V180.8 M619.63 170.3V183.2 M620.23 172.3V183.8 M620.61 173.3V184.4 M620.40 170.1V182.9 M621.57 172.0V180.7 M621.50 170.1V181.3 M621.49 170.2V182.0 M622.29 173.3V180.9 M622.41 167.2V184.4 M622.29 171.2V183.1 M623.64 173.0V180.0 M623.46 170.9V184.1 M623.77 170.7V183.0 M624.55 170.1V183.8 M624.44 172.2V184.3 M624.49 164.5V184.6 M625.52 171.5V184.0 M625.43 173.2V182.1 M625.43 171.9V181.2 M626.40 171.0V182.4 M626.68 169.9V180.3 M626.63 169.9V181.2 M627.25 173.1V182.5 M627.72 173.2V180.9 M627.79 165.9V183.4 M628.58 169.3V180.1 M628.78 169.5V182.7 M628.35 170.9V182.0 M629.31 170.4V184.5 M629.61 169.1V185.2 M629.47 169.6V183.6 M630.77 173.0V181.5 M630.43 172.9V183.0 M630.20 168.2V183.5 M631.64 172.7V183.0 M631.57 171.1V184.3 M631.68 170.8V181.2 M632.39 172.7V184.5 M632.49 172.5V187.6 M632.65 170.6V180.4 M633.55 170.1V182.6 M633.26 171.2V180.4 M633.35 165.5V182.0 M634.63 172.4V180.4 M634.75 170.4V181.3 M634.69 173.3V181.9 M635.77 172.5V183.9 M635.23 167.9V180.7 M635.43 173.5V185.9 M636.25 170.5V180.1 M636.48 172.9V180.2 M636.31 172.4V181.5 M637.40 170.0V182.3 M637.35 170.2V182.1 M637.66 167.2V182.8 M638.26 172.0V183.8 M638.34 173.2V183.1 M638.30 171.4V184.3 M639.48 172.2V182.2 M639.66 171.5V181.7 M639.79 166.4V181.7 M640.53 170.1V184.4 M640.58 170.2V180.6 M640.77 171.8V183.1 M641.42 172.0V183.9 M641.24 171.9V193.4 M641.27 169.5V180.9 M642.80 172.8V183.1 M642.78 172.2V181.4 M642.74 170.8V180.0 M643.70 171.9V180.6 M643.51 169.9V181.2 M643.24 170.8V181.8 M644.36 172.8V180.5 M644.80 170.1V183.0 M644.53 173.5V186.2 M645.29 170.9V181.6 M645.54 171.9V180.7 M645.45 171.7V182.6 M646.34 170.4V181.1 M646.66 169.9V181.7 M646.50 170.4V183.8" stroke="#3b8ef4" stroke-width="0.8" fill="none"/><path d="M521.5 118.7V156.8 M521.5 199.7V214.3 M522.5 124.7V143.4 M522.5 200.4V229.4 M523.5 125.1V145.9 M524.5 118.1V153.3 M524.5 196.9V227.2 M525.5 118.5V152.4 M525.5 192.5V214.4 M526.5 201.9V210.2 M527.5 119.3V152.7 M528.5 122.0V142.1 M528.5 193.6V223.2 M529.5 133.8V157.9 M529.5 195.4V216.0 M530.5 118.8V153.0 M530.5 196.9V230.8 M531.5 129.2V156.7 M531.5 191.6V222.7 M532.5 140.3V149.9 M533.5 120.2V149.6 M533.5 192.3V223.4 M534.5 134.9V151.3 M535.5 131.6V143.8 M536.5 134.8V147.6 M536.5 201.1V230.5 M537.5 135.2V149.0" stroke="#c8c840" stroke-width="0.9" fill="none"/><path d="M521.5 154.8V201.7 M522.5 141.4V202.4 M523.5 143.9V194.5 M524.5 151.3V198.9 M525.5 150.4V194.5 M526.5 141.6V203.9 M527.5 150.7V198.9 M528.5 140.1V195.6 M529.5 155.9V197.4 M530.5 151.0V198.9 M531.5 154.7V193.6 M532.5 147.9V204.9 M533.5 147.6V194.3 M534.5 149.3V207.6 M535.5 141.8V197.2 M536.5 145.6V203.1 M537.5 147.0V192.1 M538.5 150.2V194.5" stroke="#ffff00" stroke-width="1.05" fill="none"/><path d="M530.7 97V122M535.5 97V118" stroke="#8c8c50" stroke-width="1" fill="none"/></svg><div style="position:absolute;left:651px;top:80.5px;width:239px;height:192px;background:#3a8ce4;"></div><div style="position:absolute;left:653px;top:82px;width:235px;height:188.5px;background:#000;"></div><div style="position:absolute;left:653px;top:82px;width:235px;height:15px;background:#2252b2;"></div><div style="position:absolute;left:838.2px;top:87px;width:6px;height:6px;border-radius:50%;background:#f2ee3c;box-shadow:0 0 0 1px #111"></div><svg style="position:absolute;left:653px;top:97px" width="235" height="159" viewBox="653 97 235 159"><path d="M676.5 97V255.5 M700.5 97V255.5 M723.5 97V255.5 M747.5 97V255.5 M770.5 97V255.5 M793.5 97V255.5 M817.5 97V255.5 M840.5 97V255.5 M864.5 97V255.5 M653.5 102.5H887 M653.5 149.5H887 M653.5 196.5H887 M653.5 243.5H887" stroke="#575757" stroke-width="1" fill="none"/><path d="M653.5 255.5H887" stroke="#5a5a5a" stroke-width="1"/><path d="M653.5 243 C660 235 666 229 672 227.5 L675.3 226.3 L675.8 180 L676.5 119.6 L862.8 119.6 L864.3 126 L864.8 175 L865 226 L868 227.5 C874 229 880 233 887 243" stroke="#d8d020" stroke-width="1" fill="none"/></svg><div style="position:absolute;left:93px;top:276px;width:315px;height:273px;background:#1c2127;"></div><div style="position:absolute;left:93px;top:276px;width:315px;height:15px;background:#2e3337;"></div><div style="position:absolute;left:304px;top:276px;width:43px;height:14.5px;background:#1a8ae6;"></div><div style="position:absolute;left:347px;top:276px;width:46px;height:14.5px;background:#4b5a68;"></div><div style="position:absolute;left:94px;top:292px;width:311px;height:16px;background:#6b6a78;"></div><div style="position:absolute;left:94px;top:308px;width:311px;height:146px;background:#000;"></div><div style="position:absolute;left:286.5px;top:292px;width:1px;height:162px;background:#555;"></div><div style="position:absolute;left:94px;top:366px;width:311px;height:1px;background:#555;"></div><div style="position:absolute;left:94px;top:409px;width:311px;height:1px;background:#555;"></div><div style="position:absolute;left:94px;top:438px;width:311px;height:1px;background:#555;"></div><div style="position:absolute;left:412px;top:276px;width:236px;height:273px;background:#1c2227;"></div><div style="position:absolute;left:412px;top:276px;width:236px;height:15px;background:#2e3337;"></div><div style="position:absolute;left:413px;top:291px;width:56.2px;height:12.2px;background:#3b8fe2;"></div><div style="position:absolute;left:469.2px;top:291px;width:42.8px;height:12.2px;background:#43b8ec;"></div><div style="position:absolute;left:512px;top:291px;width:49.9px;height:12.2px;background:#98e8f8;"></div><div style="position:absolute;left:561.9px;top:291px;width:37.5px;height:12.2px;background:#3a7286;"></div><div style="position:absolute;left:599.4px;top:291px;width:37.6px;height:12.2px;background:#3d6fa0;"></div><div style="position:absolute;left:413px;top:303.2px;width:56.2px;height:10px;background:#3378cc;"></div><div style="position:absolute;left:469.2px;top:303.2px;width:42.8px;height:10px;background:#b8dcea;"></div><div style="position:absolute;left:512px;top:303.2px;width:49.9px;height:10px;background:#d0d0d2;"></div><div style="position:absolute;left:561.9px;top:303.2px;width:37.5px;height:10px;background:#2cd010;"></div><div style="position:absolute;left:586px;top:303.2px;width:7px;height:10px;background:#22a810;"></div><div style="position:absolute;left:599.4px;top:303.2px;width:37.6px;height:10px;background:#000;"></div><div style="position:absolute;left:413px;top:313.5px;width:224px;height:225.2px;background:#33dd00;"></div><div style="position:absolute;left:413px;top:313.5px;width:2.7px;height:225.2px;background:#3b6ca2;"></div><svg style="position:absolute;left:412px;top:313px" width="237" height="227" viewBox="412 313 237 227"><path d="M415.7 317.5H637 M415.7 368.5H637 M415.7 419.5H637 M415.7 471.5H637 M415.7 522.5H637" stroke="#2a8a12" stroke-width="1" fill="none"/><rect x="421.8" y="314" width="6.2" height="224.7" fill="#cddcc0"/><rect x="504.5" y="314" width="6.2" height="224.7" fill="#cddcc0"/><rect x="586.7" y="314" width="6.2" height="224.7" fill="#cddcc0"/><path d="M421.8 316h6.2v0.8h-6.2Z M421.8 319h6.2v0.8h-6.2Z M421.8 322h6.2v0.8h-6.2Z M421.8 325h6.2v0.8h-6.2Z M421.8 328h6.2v0.8h-6.2Z M421.8 331h6.2v0.8h-6.2Z M421.8 334h6.2v0.8h-6.2Z M421.8 337h6.2v0.8h-6.2Z M421.8 340h6.2v0.8h-6.2Z M421.8 343h6.2v0.8h-6.2Z M421.8 346h6.2v0.8h-6.2Z M421.8 349h6.2v0.8h-6.2Z M421.8 352h6.2v0.8h-6.2Z M421.8 355h6.2v0.8h-6.2Z M421.8 358h6.2v0.8h-6.2Z M421.8 361h6.2v0.8h-6.2Z M421.8 364h6.2v0.8h-6.2Z M421.8 367h6.2v0.8h-6.2Z M421.8 370h6.2v0.8h-6.2Z M421.8 373h6.2v0.8h-6.2Z M421.8 376h6.2v0.8h-6.2Z M421.8 379h6.2v0.8h-6.2Z M421.8 382h6.2v0.8h-6.2Z M421.8 385h6.2v0.8h-6.2Z M421.8 388h6.2v0.8h-6.2Z M421.8 391h6.2v0.8h-6.2Z M421.8 394h6.2v0.8h-6.2Z M421.8 397h6.2v0.8h-6.2Z M421.8 400h6.2v0.8h-6.2Z M421.8 403h6.2v0.8h-6.2Z M421.8 406h6.2v0.8h-6.2Z M421.8 409h6.2v0.8h-6.2Z M421.8 412h6.2v0.8h-6.2Z M421.8 415h6.2v0.8h-6.2Z M421.8 418h6.2v0.8h-6.2Z M421.8 421h6.2v0.8h-6.2Z M421.8 424h6.2v0.8h-6.2Z M421.8 427h6.2v0.8h-6.2Z M421.8 430h6.2v0.8h-6.2Z M421.8 433h6.2v0.8h-6.2Z M421.8 436h6.2v0.8h-6.2Z M421.8 439h6.2v0.8h-6.2Z M421.8 442h6.2v0.8h-6.2Z M421.8 445h6.2v0.8h-6.2Z M421.8 448h6.2v0.8h-6.2Z M421.8 451h6.2v0.8h-6.2Z M421.8 454h6.2v0.8h-6.2Z M421.8 457h6.2v0.8h-6.2Z M421.8 460h6.2v0.8h-6.2Z M421.8 463h6.2v0.8h-6.2Z M421.8 466h6.2v0.8h-6.2Z M421.8 469h6.2v0.8h-6.2Z M421.8 472h6.2v0.8h-6.2Z M421.8 475h6.2v0.8h-6.2Z M421.8 478h6.2v0.8h-6.2Z M421.8 481h6.2v0.8h-6.2Z M421.8 484h6.2v0.8h-6.2Z M421.8 487h6.2v0.8h-6.2Z M421.8 490h6.2v0.8h-6.2Z M421.8 493h6.2v0.8h-6.2Z M421.8 496h6.2v0.8h-6.2Z M421.8 499h6.2v0.8h-6.2Z M421.8 502h6.2v0.8h-6.2Z M421.8 505h6.2v0.8h-6.2Z M421.8 508h6.2v0.8h-6.2Z M421.8 511h6.2v0.8h-6.2Z M421.8 514h6.2v0.8h-6.2Z M421.8 517h6.2v0.8h-6.2Z M421.8 520h6.2v0.8h-6.2Z M421.8 523h6.2v0.8h-6.2Z M421.8 526h6.2v0.8h-6.2Z M421.8 529h6.2v0.8h-6.2Z M421.8 532h6.2v0.8h-6.2Z M421.8 535h6.2v0.8h-6.2Z M504.5 316h6.2v0.8h-6.2Z M504.5 319h6.2v0.8h-6.2Z M504.5 322h6.2v0.8h-6.2Z M504.5 325h6.2v0.8h-6.2Z M504.5 328h6.2v0.8h-6.2Z M504.5 331h6.2v0.8h-6.2Z M504.5 334h6.2v0.8h-6.2Z M504.5 337h6.2v0.8h-6.2Z M504.5 340h6.2v0.8h-6.2Z M504.5 343h6.2v0.8h-6.2Z M504.5 346h6.2v0.8h-6.2Z M504.5 349h6.2v0.8h-6.2Z M504.5 352h6.2v0.8h-6.2Z M504.5 355h6.2v0.8h-6.2Z M504.5 358h6.2v0.8h-6.2Z M504.5 361h6.2v0.8h-6.2Z M504.5 364h6.2v0.8h-6.2Z M504.5 367h6.2v0.8h-6.2Z M504.5 370h6.2v0.8h-6.2Z M504.5 373h6.2v0.8h-6.2Z M504.5 376h6.2v0.8h-6.2Z M504.5 379h6.2v0.8h-6.2Z M504.5 382h6.2v0.8h-6.2Z M504.5 385h6.2v0.8h-6.2Z M504.5 388h6.2v0.8h-6.2Z M504.5 391h6.2v0.8h-6.2Z M504.5 394h6.2v0.8h-6.2Z M504.5 397h6.2v0.8h-6.2Z M504.5 400h6.2v0.8h-6.2Z M504.5 403h6.2v0.8h-6.2Z M504.5 406h6.2v0.8h-6.2Z M504.5 409h6.2v0.8h-6.2Z M504.5 412h6.2v0.8h-6.2Z M504.5 415h6.2v0.8h-6.2Z M504.5 418h6.2v0.8h-6.2Z M504.5 421h6.2v0.8h-6.2Z M504.5 424h6.2v0.8h-6.2Z M504.5 427h6.2v0.8h-6.2Z M504.5 430h6.2v0.8h-6.2Z M504.5 433h6.2v0.8h-6.2Z M504.5 436h6.2v0.8h-6.2Z M504.5 439h6.2v0.8h-6.2Z M504.5 442h6.2v0.8h-6.2Z M504.5 445h6.2v0.8h-6.2Z M504.5 448h6.2v0.8h-6.2Z M504.5 451h6.2v0.8h-6.2Z M504.5 454h6.2v0.8h-6.2Z M504.5 457h6.2v0.8h-6.2Z M504.5 460h6.2v0.8h-6.2Z M504.5 463h6.2v0.8h-6.2Z M504.5 466h6.2v0.8h-6.2Z M504.5 469h6.2v0.8h-6.2Z M504.5 472h6.2v0.8h-6.2Z M504.5 475h6.2v0.8h-6.2Z M504.5 478h6.2v0.8h-6.2Z M504.5 481h6.2v0.8h-6.2Z M504.5 484h6.2v0.8h-6.2Z M504.5 487h6.2v0.8h-6.2Z M504.5 490h6.2v0.8h-6.2Z M504.5 493h6.2v0.8h-6.2Z M504.5 496h6.2v0.8h-6.2Z M504.5 499h6.2v0.8h-6.2Z M504.5 502h6.2v0.8h-6.2Z M504.5 505h6.2v0.8h-6.2Z M504.5 508h6.2v0.8h-6.2Z M504.5 511h6.2v0.8h-6.2Z M504.5 514h6.2v0.8h-6.2Z M504.5 517h6.2v0.8h-6.2Z M504.5 520h6.2v0.8h-6.2Z M504.5 523h6.2v0.8h-6.2Z M504.5 526h6.2v0.8h-6.2Z M504.5 529h6.2v0.8h-6.2Z M504.5 532h6.2v0.8h-6.2Z M504.5 535h6.2v0.8h-6.2Z M586.7 316h6.2v0.8h-6.2Z M586.7 319h6.2v0.8h-6.2Z M586.7 322h6.2v0.8h-6.2Z M586.7 325h6.2v0.8h-6.2Z M586.7 328h6.2v0.8h-6.2Z M586.7 331h6.2v0.8h-6.2Z M586.7 334h6.2v0.8h-6.2Z M586.7 337h6.2v0.8h-6.2Z M586.7 340h6.2v0.8h-6.2Z M586.7 343h6.2v0.8h-6.2Z M586.7 346h6.2v0.8h-6.2Z M586.7 349h6.2v0.8h-6.2Z M586.7 352h6.2v0.8h-6.2Z M586.7 355h6.2v0.8h-6.2Z M586.7 358h6.2v0.8h-6.2Z M586.7 361h6.2v0.8h-6.2Z M586.7 364h6.2v0.8h-6.2Z M586.7 367h6.2v0.8h-6.2Z M586.7 370h6.2v0.8h-6.2Z M586.7 373h6.2v0.8h-6.2Z M586.7 376h6.2v0.8h-6.2Z M586.7 379h6.2v0.8h-6.2Z M586.7 382h6.2v0.8h-6.2Z M586.7 385h6.2v0.8h-6.2Z M586.7 388h6.2v0.8h-6.2Z M586.7 391h6.2v0.8h-6.2Z M586.7 394h6.2v0.8h-6.2Z M586.7 397h6.2v0.8h-6.2Z M586.7 400h6.2v0.8h-6.2Z M586.7 403h6.2v0.8h-6.2Z M586.7 406h6.2v0.8h-6.2Z M586.7 409h6.2v0.8h-6.2Z M586.7 412h6.2v0.8h-6.2Z M586.7 415h6.2v0.8h-6.2Z M586.7 418h6.2v0.8h-6.2Z M586.7 421h6.2v0.8h-6.2Z M586.7 424h6.2v0.8h-6.2Z M586.7 427h6.2v0.8h-6.2Z M586.7 430h6.2v0.8h-6.2Z M586.7 433h6.2v0.8h-6.2Z M586.7 436h6.2v0.8h-6.2Z M586.7 439h6.2v0.8h-6.2Z M586.7 442h6.2v0.8h-6.2Z M586.7 445h6.2v0.8h-6.2Z M586.7 448h6.2v0.8h-6.2Z M586.7 451h6.2v0.8h-6.2Z M586.7 454h6.2v0.8h-6.2Z M586.7 457h6.2v0.8h-6.2Z M586.7 460h6.2v0.8h-6.2Z M586.7 463h6.2v0.8h-6.2Z M586.7 466h6.2v0.8h-6.2Z M586.7 469h6.2v0.8h-6.2Z M586.7 472h6.2v0.8h-6.2Z M586.7 475h6.2v0.8h-6.2Z M586.7 478h6.2v0.8h-6.2Z M586.7 481h6.2v0.8h-6.2Z M586.7 484h6.2v0.8h-6.2Z M586.7 487h6.2v0.8h-6.2Z M586.7 490h6.2v0.8h-6.2Z M586.7 493h6.2v0.8h-6.2Z M586.7 496h6.2v0.8h-6.2Z M586.7 499h6.2v0.8h-6.2Z M586.7 502h6.2v0.8h-6.2Z M586.7 505h6.2v0.8h-6.2Z M586.7 508h6.2v0.8h-6.2Z M586.7 511h6.2v0.8h-6.2Z M586.7 514h6.2v0.8h-6.2Z M586.7 517h6.2v0.8h-6.2Z M586.7 520h6.2v0.8h-6.2Z M586.7 523h6.2v0.8h-6.2Z M586.7 526h6.2v0.8h-6.2Z M586.7 529h6.2v0.8h-6.2Z M586.7 532h6.2v0.8h-6.2Z M586.7 535h6.2v0.8h-6.2Z" fill="#b0c4a2"/><rect x="492.7" y="313.5" width="5.2" height="225.2" fill="#3d70a6"/><rect x="575.8" y="313.5" width="5.4" height="225.2" fill="#3d70a6"/><rect x="439" y="364.7" width="18.5" height="112.3" fill="#a8f0fa"/><rect x="463" y="364.7" width="18.1" height="112.3" fill="#a8f0fa"/><path d="M439 366h18.5v0.7h-18.5Z M463 366h18.1v0.7h-18.1Z M439 369h18.5v0.7h-18.5Z M463 369h18.1v0.7h-18.1Z M439 372h18.5v0.7h-18.5Z M463 372h18.1v0.7h-18.1Z M439 375h18.5v0.7h-18.5Z M463 375h18.1v0.7h-18.1Z M439 378h18.5v0.7h-18.5Z M463 378h18.1v0.7h-18.1Z M439 381h18.5v0.7h-18.5Z M463 381h18.1v0.7h-18.1Z M439 384h18.5v0.7h-18.5Z M463 384h18.1v0.7h-18.1Z M439 387h18.5v0.7h-18.5Z M463 387h18.1v0.7h-18.1Z M439 390h18.5v0.7h-18.5Z M463 390h18.1v0.7h-18.1Z M439 393h18.5v0.7h-18.5Z M463 393h18.1v0.7h-18.1Z M439 396h18.5v0.7h-18.5Z M463 396h18.1v0.7h-18.1Z M439 399h18.5v0.7h-18.5Z M463 399h18.1v0.7h-18.1Z M439 402h18.5v0.7h-18.5Z M463 402h18.1v0.7h-18.1Z M439 405h18.5v0.7h-18.5Z M463 405h18.1v0.7h-18.1Z M439 408h18.5v0.7h-18.5Z M463 408h18.1v0.7h-18.1Z M439 411h18.5v0.7h-18.5Z M463 411h18.1v0.7h-18.1Z M439 414h18.5v0.7h-18.5Z M463 414h18.1v0.7h-18.1Z M439 417h18.5v0.7h-18.5Z M463 417h18.1v0.7h-18.1Z M439 420h18.5v0.7h-18.5Z M463 420h18.1v0.7h-18.1Z M439 423h18.5v0.7h-18.5Z M463 423h18.1v0.7h-18.1Z M439 426h18.5v0.7h-18.5Z M463 426h18.1v0.7h-18.1Z M439 429h18.5v0.7h-18.5Z M463 429h18.1v0.7h-18.1Z M439 432h18.5v0.7h-18.5Z M463 432h18.1v0.7h-18.1Z M439 435h18.5v0.7h-18.5Z M463 435h18.1v0.7h-18.1Z M439 438h18.5v0.7h-18.5Z M463 438h18.1v0.7h-18.1Z M439 441h18.5v0.7h-18.5Z M463 441h18.1v0.7h-18.1Z M439 444h18.5v0.7h-18.5Z M463 444h18.1v0.7h-18.1Z M439 447h18.5v0.7h-18.5Z M463 447h18.1v0.7h-18.1Z M439 450h18.5v0.7h-18.5Z M463 450h18.1v0.7h-18.1Z M439 453h18.5v0.7h-18.5Z M463 453h18.1v0.7h-18.1Z M439 456h18.5v0.7h-18.5Z M463 456h18.1v0.7h-18.1Z M439 459h18.5v0.7h-18.5Z M463 459h18.1v0.7h-18.1Z M439 462h18.5v0.7h-18.5Z M463 462h18.1v0.7h-18.1Z M439 465h18.5v0.7h-18.5Z M463 465h18.1v0.7h-18.1Z M439 468h18.5v0.7h-18.5Z M463 468h18.1v0.7h-18.1Z M439 471h18.5v0.7h-18.5Z M463 471h18.1v0.7h-18.1Z M439 474h18.5v0.7h-18.5Z M463 474h18.1v0.7h-18.1Z" fill="#c8f6fc"/><rect x="434" y="390.7" width="5" height="59.6" fill="#3a8ee6"/><rect x="457.5" y="390.7" width="5.5" height="59.6" fill="#3a8ee6"/><rect x="445" y="390.7" width="7" height="59.6" fill="#3ab4ee"/><rect x="469" y="390.7" width="6" height="59.6" fill="#3ab4ee"/><path d="M434 361.5H481.1V364.7H463V390.7H457.5V364.7H439V390.7H434Z" fill="#000"/><path d="M434 450.3H439V475.7H457.5V450.3H463V475.7H481.1V478.8H434Z" fill="#000"/><rect x="445" y="387.2" width="7" height="3.5" fill="#000"/><rect x="469" y="387.2" width="6" height="3.5" fill="#000"/><rect x="445" y="450.3" width="7" height="3.9" fill="#000"/><rect x="469" y="450.3" width="6" height="3.9" fill="#000"/></svg><div style="position:absolute;left:637px;top:291px;width:11px;height:258px;background:#1e262e;"></div><div style="position:absolute;left:637px;top:398.8px;width:10px;height:33.4px;background:#6a7b8a;"></div><div style="position:absolute;left:413px;top:538.7px;width:224px;height:10px;background:#1e262e;"></div><div style="position:absolute;left:423px;top:538.7px;width:27px;height:10px;background:#4f5f6d;"></div><svg style="position:absolute;left:412px;top:291px" width="237" height="259" viewBox="412 291 237 259"><path d="M639.0 298.28000000000003H645.5999999999999L642.3 294.32Z" fill="#eee"/><path d="M639.0 531.52H645.5999999999999L642.3 535.48Z" fill="#eee"/><path d="M419.28000000000003 540.4000000000001V547.0L415.32 543.7Z" fill="#eee"/><path d="M630.02 540.4000000000001V547.0L633.98 543.7Z" fill="#eee"/></svg><div style="position:absolute;left:653px;top:276px;width:235px;height:273px;background:#000;"></div><div style="position:absolute;left:653px;top:276px;width:235px;height:15px;background:#2e3337;"></div><div style="position:absolute;left:652.5px;top:291px;width:233.5px;height:256px;border:1px solid #484848"></div><div style="position:absolute;left:770px;top:292px;width:1px;height:256px;background:#5e5e5e;"></div><div style="position:absolute;left:653px;top:419.5px;width:234px;height:1px;background:#5e5e5e;"></div><div style="position:absolute;left:712.4000000000001px;top:362.09999999999997px;width:4.6px;height:4.6px;border-radius:50%;background:#f08a20"></div><div style="position:absolute;left:822.7px;top:362.09999999999997px;width:4.6px;height:4.6px;border-radius:50%;background:#f08a20"></div><div style="position:absolute;left:712.4000000000001px;top:473.3px;width:4.6px;height:4.6px;border-radius:50%;background:#f08a20"></div><div style="position:absolute;left:822.7px;top:473.3px;width:4.6px;height:4.6px;border-radius:50%;background:#f08a20"></div><div style="position:absolute;left:690.2px;top:418.5px;width:3.0px;height:3.0px;border-radius:50%;background:#5a8ae0"></div><div style="position:absolute;left:846.5px;top:418.5px;width:3.0px;height:3.0px;border-radius:50%;background:#5a8ae0"></div><div style="position:absolute;left:466px;top:267px;width:49px;height:13px;background:rgba(100,110,120,0.32);border:1px solid rgba(150,150,150,0.38);box-sizing:border-box"></div><div style="position:absolute;left:469px;top:273.0px;width:43px;height:1px;background:repeating-linear-gradient(90deg,#a0a8b0 0 1px,transparent 1px 3px)"></div><div style="position:absolute;left:645px;top:388px;width:11.5px;height:48.5px;background:rgba(100,110,120,0.32);border:1px solid rgba(150,150,150,0.38);box-sizing:border-box"></div><div style="position:absolute;left:650.25px;top:391px;width:1px;height:42.5px;background:repeating-linear-gradient(#a0a8b0 0 1px,transparent 1px 3px)"></div><div style="position:absolute;left:407.8px;top:151.8px;width:9.2px;height:49px;background:rgba(100,110,120,0.32);border:1px solid rgba(150,150,150,0.38);box-sizing:border-box"></div><div style="position:absolute;left:411.90000000000003px;top:154.8px;width:1px;height:43px;background:repeating-linear-gradient(#a0a8b0 0 1px,transparent 1px 3px)"></div><div style="position:absolute;left:405px;top:388px;width:10.7px;height:48.5px;background:rgba(100,110,120,0.32);border:1px solid rgba(150,150,150,0.38);box-sizing:border-box"></div><div style="position:absolute;left:409.85px;top:391px;width:1px;height:42.5px;background:repeating-linear-gradient(#a0a8b0 0 1px,transparent 1px 3px)"></div><div style="position:absolute;left:645px;top:152px;width:11.5px;height:48.5px;background:rgba(100,110,120,0.32);border:1px solid rgba(150,150,150,0.38);box-sizing:border-box"></div><div style="position:absolute;left:650.25px;top:155px;width:1px;height:42.5px;background:repeating-linear-gradient(#a0a8b0 0 1px,transparent 1px 3px)"></div><div style="position:absolute;left:888.5px;top:0px;width:82.5px;height:550px;background:#000;"></div><div style="position:absolute;left:891px;top:37.5px;width:80px;height:44px;background:#4e5f6e;"></div><svg style="position:absolute;left:893px;top:51.5px" width="14" height="16"><path d="M7.0600000000000005 5.4V10.6L3.94 8Z" fill="#e8e8e8"/><rect x="10.4" y="1.5" width="1.1" height="13" fill="#a8b2ba"/></svg><div style="position:absolute;left:891px;top:85px;width:80px;height:44.5px;background:#4e5f6e;"></div><svg style="position:absolute;left:893px;top:99.25px" width="14" height="16"><path d="M7.0600000000000005 5.4V10.6L3.94 8Z" fill="#e8e8e8"/><rect x="10.4" y="1.5" width="1.1" height="13" fill="#a8b2ba"/></svg><div style="position:absolute;left:891px;top:180.5px;width:80px;height:44px;background:#4e5f6e;"></div><svg style="position:absolute;left:893px;top:194.5px" width="14" height="16"><path d="M7.0600000000000005 5.4V10.6L3.94 8Z" fill="#e8e8e8"/><rect x="10.4" y="1.5" width="1.1" height="13" fill="#a8b2ba"/></svg><div style="position:absolute;left:891px;top:228px;width:80px;height:44px;background:#4e5f6e;"></div><svg style="position:absolute;left:893px;top:242.0px" width="14" height="16"><path d="M7.0600000000000005 5.4V10.6L3.94 8Z" fill="#e8e8e8"/><rect x="10.4" y="1.5" width="1.1" height="13" fill="#a8b2ba"/></svg><div style="position:absolute;left:891px;top:275.5px;width:80px;height:44px;background:#4e5f6e;"></div><svg style="position:absolute;left:893px;top:289.5px" width="14" height="16"><path d="M7.0600000000000005 5.4V10.6L3.94 8Z" fill="#e8e8e8"/><rect x="10.4" y="1.5" width="1.1" height="13" fill="#a8b2ba"/></svg><div style="position:absolute;left:891px;top:322px;width:80px;height:44.5px;background:#4e5f6e;"></div><svg style="position:absolute;left:893px;top:336.25px" width="14" height="16"><path d="M7.0600000000000005 5.4V10.6L3.94 8Z" fill="#e8e8e8"/><rect x="10.4" y="1.5" width="1.1" height="13" fill="#a8b2ba"/></svg><div style="position:absolute;left:891px;top:370px;width:80px;height:44.2px;background:#4e5f6e;"></div><svg style="position:absolute;left:893px;top:384.1px" width="14" height="16"><path d="M7.0600000000000005 5.4V10.6L3.94 8Z" fill="#e8e8e8"/><rect x="10.4" y="1.5" width="1.1" height="13" fill="#a8b2ba"/></svg><div style="position:absolute;left:891px;top:417.5px;width:80px;height:44px;background:#4e5f6e;"></div><svg style="position:absolute;left:893px;top:431.5px" width="14" height="16"><path d="M7.0600000000000005 5.4V10.6L3.94 8Z" fill="#e8e8e8"/><rect x="10.4" y="1.5" width="1.1" height="13" fill="#a8b2ba"/></svg><div style="position:absolute;left:891px;top:481.3px;width:80px;height:62px;background:#4e5f6e;"></div><svg style="position:absolute;left:891px;top:481px" width="80" height="62" viewBox="891 481 80 62"><path d="M933.9 500V504.25H903.8V513.2H911" stroke="#1e262e" stroke-width="2.4" fill="none"/><path d="M928.5 513.2H933.9L937.8 507.9H944" stroke="#1e262e" stroke-width="2.4" fill="none"/><path d="M933.9 500V504.25H903.8V513.2H911" stroke="#e6e8ee" stroke-width="1" fill="none"/><path d="M928.5 513.2H933.9L937.8 507.9H944" stroke="#e6e8ee" stroke-width="1" fill="none"/><path d="M917.9 495.8H922.5M939.5 495.8H944" stroke="#e6e8ee" stroke-width="1.4"/><path d="M921.6 493.3V498.3L925.9 495.8Z M943.8 493.3V498.3L947.1 495.8Z M910.3 510.9V515.5L914.3 513.2Z M943.2 505.6V510.6L947.1 507.9Z" fill="#e6e8ee"/><rect x="903.2" y="491" width="13.1" height="9" fill="#eaeaf0" stroke="#1e262e" stroke-width="0.8"/><rect x="928.9" y="491" width="9.3" height="9" fill="#eaeaf0" stroke="#1e262e" stroke-width="0.8"/><rect x="916.9" y="508.9" width="10.3" height="9" fill="#eaeaf0" stroke="#1e262e" stroke-width="0.8"/><rect x="950.1" y="490.6" width="9" height="27.6" fill="#eaeaf0" stroke="#1e262e" stroke-width="0.8"/><rect x="951.5" y="493.1" width="5.6" height="1" fill="#505860"/><rect x="951.5" y="496.8" width="5.6" height="1" fill="#505860"/><rect x="951.5" y="500.1" width="5.6" height="1" fill="#505860"/><rect x="951.5" y="503.8" width="5.6" height="1" fill="#505860"/><rect x="951.5" y="507.4" width="5.6" height="1" fill="#505860"/><rect x="951.5" y="511.1" width="5.6" height="1" fill="#505860"/><rect x="951.5" y="514.7" width="5.6" height="1" fill="#505860"/></svg><div style="position:absolute;left:51px;top:550px;width:920px;height:26px;background:#4a5762;"></div><div style="position:absolute;left:51px;top:552.5px;width:108.3px;height:21.3px;background:#27323a;"></div><div style="position:absolute;left:162.8px;top:552.5px;width:590.1px;height:21.3px;background:#0a6c0a;"></div><div style="position:absolute;left:752.9px;top:550.3px;width:218.1px;height:25.7px;background:#4f5f6c;"></div><svg style="position:absolute;left:51px;top:550px" width="921" height="26" viewBox="51 550 921 26"><path d="M150.1 561.3199999999999H156.70000000000002L153.4 565.28Z" fill="#d8d8d8"/><path d="M743.7 561.3199999999999H750.3L747 565.28Z" fill="#eee"/></svg><div style="position:absolute;left:843px;top:557.6px;width:56.6px;height:10.4px;border:1px solid #c4cad8;background:#06062a"></div><div style="position:absolute;left:849.9px;top:558.6px;width:1px;height:10.4px;background:#7a80a8;"></div><div style="position:absolute;left:856.3px;top:558.6px;width:1px;height:10.4px;background:#7a80a8;"></div><div style="position:absolute;left:862.7px;top:558.6px;width:1px;height:10.4px;background:#7a80a8;"></div><div style="position:absolute;left:869.1px;top:558.6px;width:1px;height:10.4px;background:#7a80a8;"></div><div style="position:absolute;left:875.5px;top:558.6px;width:1px;height:10.4px;background:#7a80a8;"></div><div style="position:absolute;left:881.9px;top:558.6px;width:1px;height:10.4px;background:#7a80a8;"></div><div style="position:absolute;left:888.3px;top:558.6px;width:1px;height:10.4px;background:#7a80a8;"></div><div style="position:absolute;left:894.7px;top:558.6px;width:1px;height:10.4px;background:#7a80a8;"></div><svg style="position:absolute;left:939px;top:557px" width="22" height="13" viewBox="0 0 22 13"><rect x="1" y="1" width="18.7" height="10.9" fill="#e01828"/><rect x="1" y="1" width="18.7" height="1.3" fill="#f0a8b0"/><rect x="1" y="9.6" width="18.7" height="2.3" fill="#f2c4c8"/><path d="M3.5 2.5L5.5 9.5L8 3.5L10.5 9L13 3L15.5 9L18 3" stroke="#9a0a14" stroke-width="1.4" fill="none"/></svg>
<svg style="position:absolute;left:0;top:0" width="1024" height="576" viewBox="0 0 1024 576"><text x="98.70" y="23.00" font-size="13" fill="#d4d4d4" font-weight="bold" textLength="61.6" lengthAdjust="spacingAndGlyphs">MultiView</text><text x="197.40" y="21.77" font-size="12.5" fill="#eeeeee" font-weight="bold" textLength="37" lengthAdjust="spacingAndGlyphs">5G NR</text><text x="107.00" y="45.02" font-size="10.8" fill="#f0f0f0" font-weight="bold" textLength="43.5" lengthAdjust="spacingAndGlyphs">Ref Level</text><text x="156.40" y="45.02" font-size="10.8" fill="#d4d4d4" textLength="45" lengthAdjust="spacingAndGlyphs">0.00 dBm</text><text x="216.00" y="45.02" font-size="10.8" fill="#f0f0f0" font-weight="bold" textLength="22" lengthAdjust="spacingAndGlyphs">Freq</text><text x="244.00" y="45.02" font-size="10.8" fill="#d4d4d4" textLength="43" lengthAdjust="spacingAndGlyphs">28.1 GHz</text><text x="301.30" y="45.02" font-size="10.8" fill="#f0f0f0" font-weight="bold" textLength="27.5" lengthAdjust="spacingAndGlyphs">Mode</text><text x="372.00" y="45.02" font-size="10.8" fill="#d4d4d4" textLength="95.3" lengthAdjust="spacingAndGlyphs">Downlink, 100 MHz</text><text x="481.90" y="45.02" font-size="10.8" fill="#f0f0f0" font-weight="bold" textLength="67" lengthAdjust="spacingAndGlyphs">Capture Time</text><text x="554.40" y="45.02" font-size="10.8" fill="#d4d4d4" textLength="37" lengthAdjust="spacingAndGlyphs">20.1 ms</text><text x="606.40" y="45.02" font-size="10.8" fill="#f0f0f0" font-weight="bold" textLength="39.6" lengthAdjust="spacingAndGlyphs">BWP/SS</text><text x="651.50" y="45.02" font-size="10.8" fill="#d4d4d4" textLength="12.3" lengthAdjust="spacingAndGlyphs">All</text><text x="862.50" y="45.02" font-size="10.8" fill="#f0f0f0" font-weight="bold" textLength="18" lengthAdjust="spacingAndGlyphs">SGL</text><text x="107.00" y="63.17" font-size="10.8" fill="#f0f0f0" font-weight="bold" textLength="15.5" lengthAdjust="spacingAndGlyphs">Att</text><text x="180.00" y="63.17" font-size="10.8" fill="#d4d4d4" textLength="21" lengthAdjust="spacingAndGlyphs">0 dB</text><text x="301.30" y="63.17" font-size="10.8" fill="#f0f0f0" font-weight="bold" textLength="64.4" lengthAdjust="spacingAndGlyphs">Frame Count</text><text x="426.80" y="63.17" font-size="10.8" fill="#d4d4d4" textLength="40.5" lengthAdjust="spacingAndGlyphs">1 of 1(1)</text><text x="481.90" y="63.17" font-size="10.8" fill="#f0f0f0" font-weight="bold" textLength="30.5" lengthAdjust="spacingAndGlyphs">Frame</text><text x="586.40" y="63.17" font-size="10.8" fill="#d4d4d4" textLength="5" lengthAdjust="spacingAndGlyphs">1</text><text x="100.70" y="79.02" font-size="10.8" fill="#d4d4d4" textLength="52.8" lengthAdjust="spacingAndGlyphs">YIG Bypass</text><text x="95.40" y="93.61" font-size="11.2" fill="#f2f2f2" font-weight="bold" textLength="87.3" lengthAdjust="spacingAndGlyphs">1 Capture Buffer</text><text x="368.00" y="93.54" font-size="11" fill="#dcdcdc" textLength="32" lengthAdjust="spacingAndGlyphs">1 Clrw</text><text x="95.80" y="108.88" font-size="8.6" fill="#2ccc2c" textLength="132" lengthAdjust="spacingAndGlyphs">Frame Start Offset : 9.088126943 ms</text><text x="97.70" y="116.74" font-size="11" fill="#808078" stroke="#808078" stroke-width="0.3" stroke-opacity="0.7" fill-opacity="0.7" textLength="34" lengthAdjust="spacingAndGlyphs">20 dBm</text><text x="97.70" y="142.54" font-size="11" fill="#808078" stroke="#808078" stroke-width="0.3" stroke-opacity="0.7" fill-opacity="0.7" textLength="32.2" lengthAdjust="spacingAndGlyphs">0 dBm</text><text x="97.70" y="168.34" font-size="11" fill="#808078" stroke="#808078" stroke-width="0.3" stroke-opacity="0.7" fill-opacity="0.7" textLength="41.9" lengthAdjust="spacingAndGlyphs">-20 dBm</text><text x="97.70" y="195.24" font-size="11" fill="#808078" stroke="#808078" stroke-width="0.3" stroke-opacity="0.7" fill-opacity="0.7" textLength="41.9" lengthAdjust="spacingAndGlyphs">-40 dBm</text><text x="97.70" y="221.24" font-size="11" fill="#808078" stroke="#808078" stroke-width="0.3" stroke-opacity="0.7" fill-opacity="0.7" textLength="41.9" lengthAdjust="spacingAndGlyphs">-60 dBm</text><text x="97.70" y="248.14" font-size="11" fill="#808078" stroke="#808078" stroke-width="0.3" stroke-opacity="0.7" fill-opacity="0.7" textLength="41.9" lengthAdjust="spacingAndGlyphs">-80 dBm</text><text x="94.60" y="267.24" font-size="11" fill="#f2f2f2" font-weight="bold" textLength="37.7" lengthAdjust="spacingAndGlyphs">0.0  ms</text><text x="226.25" y="267.24" font-size="11" fill="#f2f2f2" font-weight="bold" textLength="43.5" lengthAdjust="spacingAndGlyphs">2.01 ms/</text><text x="362.25" y="267.24" font-size="11" fill="#f2f2f2" font-weight="bold" textLength="41.25" lengthAdjust="spacingAndGlyphs">20.1 ms</text><text x="414.00" y="93.61" font-size="11.2" fill="#f2f2f2" font-weight="bold" textLength="86.5" lengthAdjust="spacingAndGlyphs">3 EVM vs Carrier</text><text x="566.50" y="93.54" font-size="11" fill="#dcdcdc" textLength="20.3" lengthAdjust="spacingAndGlyphs">1 SS</text><text x="599.00" y="93.54" font-size="11" fill="#dcdcdc" textLength="40.4" lengthAdjust="spacingAndGlyphs">2 BWP0</text><text x="417.20" y="111.34" font-size="11" fill="#808078" stroke="#808078" stroke-width="0.3" stroke-opacity="0.7" fill-opacity="0.7" textLength="27.4" lengthAdjust="spacingAndGlyphs">1.2 %</text><text x="417.20" y="142.14" font-size="11" fill="#808078" stroke="#808078" stroke-width="0.3" stroke-opacity="0.7" fill-opacity="0.7" textLength="17.7" lengthAdjust="spacingAndGlyphs">1 %</text><text x="417.20" y="172.94" font-size="11" fill="#808078" stroke="#808078" stroke-width="0.3" stroke-opacity="0.7" fill-opacity="0.7" textLength="27.4" lengthAdjust="spacingAndGlyphs">0.8 %</text><text x="417.20" y="203.54" font-size="11" fill="#808078" stroke="#808078" stroke-width="0.3" stroke-opacity="0.7" fill-opacity="0.7" textLength="27.4" lengthAdjust="spacingAndGlyphs">0.6 %</text><text x="417.20" y="233.44" font-size="11" fill="#808078" stroke="#808078" stroke-width="0.3" stroke-opacity="0.7" fill-opacity="0.7" textLength="27.4" lengthAdjust="spacingAndGlyphs">0.4 %</text><text x="417.40" y="267.24" font-size="11" fill="#f2f2f2" font-weight="bold" textLength="31.9" lengthAdjust="spacingAndGlyphs">0.0 Hz</text><text x="500.40" y="267.24" font-size="11" fill="#f2f2f2" font-weight="bold" textLength="54" lengthAdjust="spacingAndGlyphs">9.83 MHz/</text><text x="587.00" y="267.24" font-size="11" fill="#f2f2f2" font-weight="bold" textLength="55" lengthAdjust="spacingAndGlyphs">98.28 MHz</text><text x="654.00" y="93.61" font-size="11.2" fill="#f4f6ff" font-weight="bold" textLength="96" lengthAdjust="spacingAndGlyphs">5 Power Spectrum</text><text x="849.00" y="93.54" font-size="11" fill="#e4e8f4" textLength="30.7" lengthAdjust="spacingAndGlyphs">1 Clrw</text><text x="658.00" y="154.24" font-size="11" fill="#808078" stroke="#808078" stroke-width="0.3" stroke-opacity="0.7" fill-opacity="0.7" textLength="66" lengthAdjust="spacingAndGlyphs">-100 dBm/Hz</text><text x="658.00" y="200.94" font-size="11" fill="#808078" stroke="#808078" stroke-width="0.3" stroke-opacity="0.7" fill-opacity="0.7" textLength="66" lengthAdjust="spacingAndGlyphs">-120 dBm/Hz</text><text x="658.00" y="247.94" font-size="11" fill="#808078" stroke="#808078" stroke-width="0.3" stroke-opacity="0.7" fill-opacity="0.7" textLength="66" lengthAdjust="spacingAndGlyphs">-140 dBm/Hz</text><text x="657.40" y="267.24" font-size="11" fill="#f2f2f2" font-weight="bold" textLength="31.9" lengthAdjust="spacingAndGlyphs">0.0 Hz</text><text x="738.50" y="267.24" font-size="11" fill="#f2f2f2" font-weight="bold" textLength="59.5" lengthAdjust="spacingAndGlyphs">12.29 MHz/</text><text x="821.00" y="267.24" font-size="11" fill="#f2f2f2" font-weight="bold" textLength="61.5" lengthAdjust="spacingAndGlyphs">122.88 MHz</text><text x="95.00" y="287.01" font-size="11.2" fill="#f2f2f2" font-weight="bold" textLength="96.4" lengthAdjust="spacingAndGlyphs">2 Result Summary</text><text x="311.60" y="286.38" font-size="8.6" fill="#e8f4ff" textLength="30" lengthAdjust="spacingAndGlyphs">Selected</text><text x="351.60" y="286.38" font-size="8.6" fill="#dde4ea" textLength="33.8" lengthAdjust="spacingAndGlyphs">Averaged</text><text x="99.70" y="302.99" font-size="10.6" fill="#f4f4f4" font-weight="bold" textLength="114.5" lengthAdjust="spacingAndGlyphs">Frame Results Selected</text><text x="369.80" y="302.99" font-size="10.6" fill="#f4f4f4" font-weight="bold" textLength="27.4" lengthAdjust="spacingAndGlyphs">Mean</text><text x="99.70" y="319.72" font-size="10.4" fill="#ebebeb" textLength="109.3" lengthAdjust="spacingAndGlyphs">EVM PDSCH QPSK (%)</text><text x="377.60" y="319.79" font-size="10.6" fill="#f4f4f4" font-weight="bold" textLength="19.6" lengthAdjust="spacingAndGlyphs">0.75</text><text x="99.70" y="334.12" font-size="10.4" fill="#ebebeb" textLength="118.8" lengthAdjust="spacingAndGlyphs">EVM PDSCH 16QAM (%)</text><text x="99.70" y="348.52" font-size="10.4" fill="#ebebeb" textLength="118.8" lengthAdjust="spacingAndGlyphs">EVM PDSCH 64QAM (%)</text><text x="99.70" y="362.92" font-size="10.4" fill="#ebebeb" textLength="124.8" lengthAdjust="spacingAndGlyphs">EVM PDSCH 256QAM (%)</text><text x="99.70" y="377.32" font-size="10.4" fill="#ebebeb" textLength="57.4" lengthAdjust="spacingAndGlyphs">EVM All (%)</text><text x="384.00" y="377.39" font-size="10.6" fill="#f4f4f4" font-weight="bold" textLength="19.6" lengthAdjust="spacingAndGlyphs">0.75</text><text x="99.70" y="391.72" font-size="10.4" fill="#ebebeb" textLength="111.4" lengthAdjust="spacingAndGlyphs">EVM Phys Channel (%)</text><text x="384.00" y="391.79" font-size="10.6" fill="#f4f4f4" font-weight="bold" textLength="19.6" lengthAdjust="spacingAndGlyphs">0.75</text><text x="99.70" y="406.12" font-size="10.4" fill="#ebebeb" textLength="101.3" lengthAdjust="spacingAndGlyphs">EVM Phys Signal (%)</text><text x="384.00" y="406.19" font-size="10.6" fill="#f4f4f4" font-weight="bold" textLength="19.6" lengthAdjust="spacingAndGlyphs">0.73</text><text x="99.70" y="420.52" font-size="10.4" fill="#ebebeb" textLength="101.3" lengthAdjust="spacingAndGlyphs">Frequency Error (Hz)</text><text x="379.30" y="420.59" font-size="10.6" fill="#f4f4f4" font-weight="bold" textLength="24.3" lengthAdjust="spacingAndGlyphs">-2.57</text><text x="99.70" y="434.92" font-size="10.4" fill="#ebebeb" textLength="105.7" lengthAdjust="spacingAndGlyphs">Sampling Error (ppm)</text><text x="384.00" y="434.99" font-size="10.6" fill="#f4f4f4" font-weight="bold" textLength="19.6" lengthAdjust="spacingAndGlyphs">0.50</text><text x="99.70" y="449.32" font-size="10.4" fill="#ebebeb" textLength="63.1" lengthAdjust="spacingAndGlyphs">Power (dBm)</text><text x="379.30" y="449.39" font-size="10.6" fill="#f4f4f4" font-weight="bold" textLength="24.3" lengthAdjust="spacingAndGlyphs">-7.34</text><text x="414.40" y="287.01" font-size="11.2" fill="#f2f2f2" font-weight="bold" textLength="155.9" lengthAdjust="spacingAndGlyphs">4 Alloc ID vs Symbol X Carrier</text><text x="433.50" y="299.81" font-size="8.4" fill="#16306e" textLength="15" lengthAdjust="spacingAndGlyphs">PSS</text><text x="483.40" y="299.81" font-size="8.4" fill="#16306e" textLength="15" lengthAdjust="spacingAndGlyphs">SSS</text><text x="526.20" y="299.81" font-size="8.4" fill="#184866" textLength="21" lengthAdjust="spacingAndGlyphs">PBCH</text><text x="572.20" y="299.81" font-size="8.4" fill="#143244" textLength="17" lengthAdjust="spacingAndGlyphs">PTRS</text><text x="602.40" y="299.81" font-size="8.4" fill="#12306a" textLength="31.6" lengthAdjust="spacingAndGlyphs">CORESET</text><text x="413.50" y="311.41" font-size="8.4" fill="#0a2058" textLength="55.1" lengthAdjust="spacingAndGlyphs">CORESET DMRS</text><text x="469.80" y="311.41" font-size="8.4" fill="#123050" textLength="42" lengthAdjust="spacingAndGlyphs">PBCH DMRS</text><text x="512.50" y="311.41" font-size="8.4" fill="#2a2a2a" textLength="48.2" lengthAdjust="spacingAndGlyphs">PDSCH DMRS</text><text x="565.50" y="311.41" font-size="8.4" fill="#0a3a0a" text-anchor="middle">P</text><text x="573.50" y="311.41" font-size="8.4" fill="#0a3a0a" text-anchor="middle">D</text><text x="580.50" y="311.41" font-size="8.4" fill="#0a3a0a" text-anchor="middle">S</text><text x="589.50" y="311.41" font-size="8.4" fill="#0a3a0a" text-anchor="middle">C</text><text x="596.50" y="311.41" font-size="8.4" fill="#0a3a0a" text-anchor="middle">H</text><text x="601.20" y="311.41" font-size="8.4" fill="#f2f2f2" textLength="34" lengthAdjust="spacingAndGlyphs">Not Used</text><text x="654.40" y="287.01" font-size="11.2" fill="#f2f2f2" font-weight="bold" textLength="128.8" lengthAdjust="spacingAndGlyphs">6 Constellation Diagram</text><text x="655.80" y="302.68" font-size="8.6" fill="#d0d0d0" textLength="94.5" lengthAdjust="spacingAndGlyphs">Points Measured : 916204</text><text x="914.05" y="22.12" font-size="11.5" fill="#f4f0e8" font-weight="bold" textLength="32.7" lengthAdjust="spacingAndGlyphs">5G NR</text><text x="937.80" y="53.70" font-size="10.9" fill="#f2f2f2" font-weight="bold" text-anchor="middle">Signal</text><text x="937.80" y="69.30" font-size="10.9" fill="#f2f2f2" font-weight="bold" text-anchor="middle">Description</text><text x="937.80" y="96.00" font-size="10.9" fill="#f2f2f2" font-weight="bold" text-anchor="middle">Radio</text><text x="937.80" y="107.80" font-size="10.9" fill="#f2f2f2" font-weight="bold" text-anchor="middle">Frame</text><text x="937.80" y="118.90" font-size="10.9" fill="#f2f2f2" font-weight="bold" text-anchor="middle">Config</text><text x="937.80" y="190.80" font-size="10.9" fill="#f2f2f2" font-weight="bold" text-anchor="middle">Trigger/</text><text x="937.80" y="202.50" font-size="10.9" fill="#f2f2f2" font-weight="bold" text-anchor="middle">Signal</text><text x="937.80" y="214.30" font-size="10.9" fill="#f2f2f2" font-weight="bold" text-anchor="middle">Capture</text><text x="937.80" y="252.00" font-size="10.9" fill="#f2f2f2" font-weight="bold" text-anchor="middle">Tracking</text><text x="937.80" y="298.50" font-size="10.9" fill="#f2f2f2" font-weight="bold" text-anchor="middle">Demod</text><text x="937.80" y="338.60" font-size="10.9" fill="#f2f2f2" font-weight="bold" text-anchor="middle">Evaluation</text><text x="937.80" y="354.30" font-size="10.9" fill="#f2f2f2" font-weight="bold" text-anchor="middle">Range</text><text x="937.80" y="386.00" font-size="10.9" fill="#f2f2f2" font-weight="bold" text-anchor="middle">Result</text><text x="937.80" y="401.70" font-size="10.9" fill="#f2f2f2" font-weight="bold" text-anchor="middle">Settings</text><text x="937.80" y="433.70" font-size="10.9" fill="#f2f2f2" font-weight="bold" text-anchor="middle">Display</text><text x="937.80" y="449.30" font-size="10.9" fill="#f2f2f2" font-weight="bold" text-anchor="middle">Config</text><text x="908.90" y="533.50" font-size="10.9" fill="#f2f2f2" font-weight="bold" textLength="45" lengthAdjust="spacingAndGlyphs">Overview</text><text x="426.70" y="567.39" font-size="10.6" fill="#dcf2d4" font-weight="bold" textLength="50.3" lengthAdjust="spacingAndGlyphs">Sync Found</text><text x="785.70" y="567.19" font-size="10.6" fill="#f0f0f0" font-weight="bold" textLength="26.3" lengthAdjust="spacingAndGlyphs">Ready</text></svg>
</body></html>
